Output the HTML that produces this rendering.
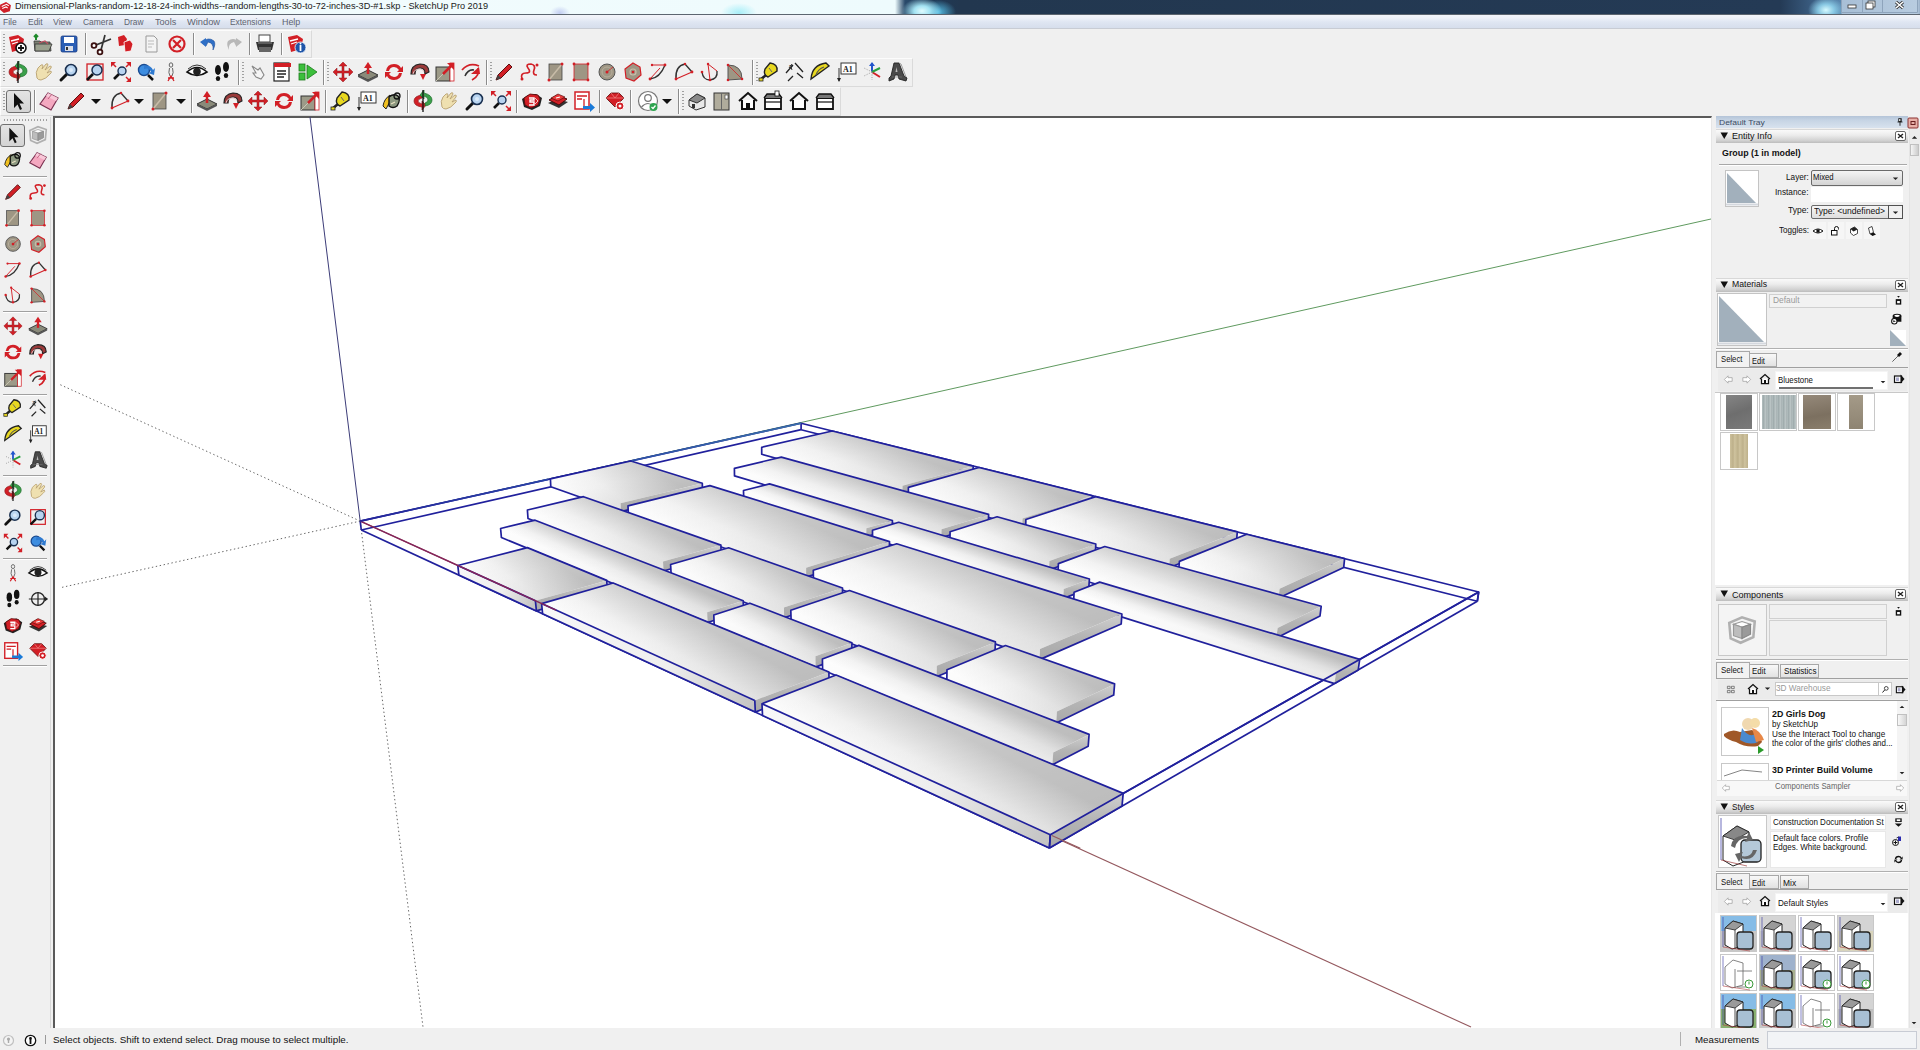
<!DOCTYPE html><html><head><meta charset="utf-8"><style>
*{margin:0;padding:0;box-sizing:border-box}
html,body{width:1920px;height:1050px;overflow:hidden;background:#f0f0f0;font-family:"Liberation Sans", sans-serif}
.a{position:absolute}
#title{left:0;top:0;width:1920px;height:14px;overflow:hidden;background:
radial-gradient(ellipse 10px 7px at 560px 13px,rgba(150,160,230,0.5),rgba(150,160,230,0) 100%),
radial-gradient(ellipse 18px 10px at 739px 13px,rgba(120,230,245,0.6),rgba(120,230,245,0) 100%),
radial-gradient(ellipse 20px 13px at 922px 11px,rgba(225,252,255,1),rgba(170,235,250,0.95) 40%,rgba(60,150,210,0) 100%),
radial-gradient(ellipse 18px 12px at 938px 12px,rgba(90,200,240,0.9),rgba(60,150,210,0) 100%),
radial-gradient(ellipse 18px 13px at 1826px 10px,rgba(215,250,255,1),rgba(150,220,245,0.8) 45%,rgba(60,150,210,0) 100%),
linear-gradient(90deg,#f3fcfd 0px,#eefbfd 895px,#2a4a6a 905px,#1f3a58 930px,#22374f 960px,#243a55 1780px,#3a5c80 1812px,#5a88b0 1841px,#a8bfd6 1842px,#b8cce0 1917px,#9ab0c8 1920px)}
#titleline{left:0;top:14px;width:1920px;height:1px;background:#5d6670}
#menu{left:0;top:15px;width:1920px;height:14px;background:linear-gradient(180deg,#f3f5fa 0,#eef1f8 3px,#dfe6f2 7px,#d6deec 13px);border-bottom:1px solid #c8ccd4}
#menu span{position:absolute;top:1px;font-size:10.5px;line-height:12px;color:#6a7a90}
#tb{left:0;top:29px;width:1920px;height:88px;background:#f0f0f0}
#vp{left:53px;top:116px;width:1659px;height:913px;background:#fff;border-top:2px solid #5a5a5a;border-left:2px solid #5a5a5a;border-bottom:1px solid #cfcfcf;border-right:1px solid #e6e6e6}
#lt{left:0;top:117px;width:51px;height:911px;background:#f0f0f0;border-right:1px solid #d8d8d8}
#status{left:0;top:1028px;width:1920px;height:22px;background:#f0f0f0}
#status .t{position:absolute;top:5px;font-size:10.5px;line-height:12px;color:#111;white-space:nowrap}
</style></head><body>
<div class="a" id="title"></div>
<div class="a" style="left:14.64px;top:0.63px;font-size:9px;line-height:11.7px;color:#1a1a1a;white-space:nowrap;transform-origin:0 0;transform:scaleX(1.019);">Dimensional-Planks-random-12-18-24-inch-widths--random-lengths-30-to-72-inches-3D-#1.skp - SketchUp Pro 2019</div>
<div class="a" id="titleline"></div>
<svg class="a" style="left:-1.5px;top:0.5px" width="13" height="13" viewBox="0 0 24 24"><use href="#i_logo"/></svg>
<svg class="a" style="left:1841px;top:0px" width="79" height="14"><path d="M21.5 0 V12 M41.5 0 V12" stroke="#8ea4bc" stroke-width="1"/><path d="M0.5 0 V12.5 H76.5 V0" fill="none" stroke="#8ea4bc" stroke-width="1"/><rect x="7" y="5" width="8" height="3" fill="#fff" stroke="#333" stroke-width="0.8"/><rect x="27" y="1" width="7" height="6" fill="#fff" stroke="#333" stroke-width="0.8"/><rect x="25" y="3" width="7" height="6" fill="#fff" stroke="#333" stroke-width="0.8"/><path d="M55 2 L62 8 M62 2 L55 8" stroke="#333" stroke-width="3"/><path d="M55 2 L62 8 M62 2 L55 8" stroke="#fff" stroke-width="1.6"/></svg>
<div class="a" id="menu"></div>
<div class="a" style="left:3.38px;top:16.48px;font-size:9.3px;line-height:12.09px;color:#5f6470;white-space:nowrap;transform-origin:0 0;transform:scaleX(0.918);">File</div>
<div class="a" style="left:27.53px;top:16.48px;font-size:9.3px;line-height:12.09px;color:#5f6470;white-space:nowrap;transform-origin:0 0;transform:scaleX(0.911);">Edit</div>
<div class="a" style="left:52.93px;top:16.48px;font-size:9.3px;line-height:12.09px;color:#5f6470;white-space:nowrap;transform-origin:0 0;transform:scaleX(0.936);">View</div>
<div class="a" style="left:82.53px;top:16.48px;font-size:9.3px;line-height:12.09px;color:#5f6470;white-space:nowrap;transform-origin:0 0;transform:scaleX(0.910);">Camera</div>
<div class="a" style="left:123.83px;top:16.48px;font-size:9.3px;line-height:12.09px;color:#5f6470;white-space:nowrap;transform-origin:0 0;transform:scaleX(0.901);">Draw</div>
<div class="a" style="left:154.63px;top:16.48px;font-size:9.3px;line-height:12.09px;color:#5f6470;white-space:nowrap;transform-origin:0 0;transform:scaleX(0.979);">Tools</div>
<div class="a" style="left:186.63px;top:16.48px;font-size:9.3px;line-height:12.09px;color:#5f6470;white-space:nowrap;transform-origin:0 0;transform:scaleX(0.998);">Window</div>
<div class="a" style="left:230.43px;top:16.48px;font-size:9.3px;line-height:12.09px;color:#5f6470;white-space:nowrap;transform-origin:0 0;transform:scaleX(0.899);">Extensions</div>
<div class="a" style="left:282.13px;top:16.48px;font-size:9.3px;line-height:12.09px;color:#5f6470;white-space:nowrap;transform-origin:0 0;transform:scaleX(0.957);">Help</div>
<div class="a" id="tb"></div>
<div class="a" id="lt"></div>
<div class="a" id="vp"></div>
<svg width="1920" height="1050" style="position:absolute;left:0;top:0">
<defs><clipPath id="vp"><rect x="54" y="117" width="1657" height="910"/></clipPath><linearGradient id="gv" x1="0" y1="0" x2="0.25" y2="1" gradientUnits="objectBoundingBox"><stop offset="0" stop-color="#fcfcfc"/><stop offset="0.3" stop-color="#f4f4f4"/><stop offset="0.75" stop-color="#d4d4d4"/><stop offset="1" stop-color="#c0c0c0"/></linearGradient><linearGradient id="ge" x1="0" y1="0" x2="0" y2="1"><stop offset="0" stop-color="#d0d0d0"/><stop offset="0.5" stop-color="#b4b4b4"/><stop offset="1" stop-color="#a8a8a8"/></linearGradient><linearGradient id="g1" gradientUnits="userSpaceOnUse" x1="0" y1="0" x2="0.3" y2="1" gradientTransform="matrix(140.87 38.47 70.58 -16.33 761.67 447.29)"><stop offset="0" stop-color="#fdfdfd"/><stop offset="0.35" stop-color="#f3f3f3"/><stop offset="0.8" stop-color="#d8d8d8"/><stop offset="1" stop-color="#cccccc"/></linearGradient><linearGradient id="h1" gradientUnits="userSpaceOnUse" x1="0" y1="0" x2="1" y2="0" gradientTransform="matrix(140.87 38.47 70.58 -16.33 761.67 447.29)"><stop offset="0" stop-color="#000" stop-opacity="0"/><stop offset="0.45" stop-color="#000" stop-opacity="0.02"/><stop offset="1" stop-color="#000" stop-opacity="0.08"/></linearGradient><linearGradient id="g2" gradientUnits="userSpaceOnUse" x1="0" y1="0" x2="0.3" y2="1" gradientTransform="matrix(114.17 31.18 70.64 -19.84 908.36 487.35)"><stop offset="0" stop-color="#fdfdfd"/><stop offset="0.35" stop-color="#f3f3f3"/><stop offset="0.8" stop-color="#d8d8d8"/><stop offset="1" stop-color="#cccccc"/></linearGradient><linearGradient id="h2" gradientUnits="userSpaceOnUse" x1="0" y1="0" x2="1" y2="0" gradientTransform="matrix(114.17 31.18 70.64 -19.84 908.36 487.35)"><stop offset="0" stop-color="#000" stop-opacity="0"/><stop offset="0.45" stop-color="#000" stop-opacity="0.02"/><stop offset="1" stop-color="#000" stop-opacity="0.08"/></linearGradient><linearGradient id="g3" gradientUnits="userSpaceOnUse" x1="0" y1="0" x2="0.3" y2="1" gradientTransform="matrix(143.84 39.29 69.75 -22.88 1025.90 519.46)"><stop offset="0" stop-color="#fdfdfd"/><stop offset="0.35" stop-color="#f3f3f3"/><stop offset="0.8" stop-color="#d8d8d8"/><stop offset="1" stop-color="#cccccc"/></linearGradient><linearGradient id="h3" gradientUnits="userSpaceOnUse" x1="0" y1="0" x2="1" y2="0" gradientTransform="matrix(143.84 39.29 69.75 -22.88 1025.90 519.46)"><stop offset="0" stop-color="#000" stop-opacity="0"/><stop offset="0.45" stop-color="#000" stop-opacity="0.02"/><stop offset="1" stop-color="#000" stop-opacity="0.08"/></linearGradient><linearGradient id="g4" gradientUnits="userSpaceOnUse" x1="0" y1="0" x2="0.3" y2="1" gradientTransform="matrix(100.22 27.37 67.35 -27.16 1179.36 561.37)"><stop offset="0" stop-color="#fdfdfd"/><stop offset="0.35" stop-color="#f3f3f3"/><stop offset="0.8" stop-color="#d8d8d8"/><stop offset="1" stop-color="#cccccc"/></linearGradient><linearGradient id="h4" gradientUnits="userSpaceOnUse" x1="0" y1="0" x2="1" y2="0" gradientTransform="matrix(100.22 27.37 67.35 -27.16 1179.36 561.37)"><stop offset="0" stop-color="#000" stop-opacity="0"/><stop offset="0.45" stop-color="#000" stop-opacity="0.02"/><stop offset="1" stop-color="#000" stop-opacity="0.08"/></linearGradient><linearGradient id="g5" gradientUnits="userSpaceOnUse" x1="0" y1="0" x2="0.3" y2="1" gradientTransform="matrix(207.17 60.85 46.92 -11.27 734.36 468.42)"><stop offset="0" stop-color="#fdfdfd"/><stop offset="0.35" stop-color="#f3f3f3"/><stop offset="0.8" stop-color="#d8d8d8"/><stop offset="1" stop-color="#cccccc"/></linearGradient><linearGradient id="h5" gradientUnits="userSpaceOnUse" x1="0" y1="0" x2="1" y2="0" gradientTransform="matrix(207.17 60.85 46.92 -11.27 734.36 468.42)"><stop offset="0" stop-color="#000" stop-opacity="0"/><stop offset="0.45" stop-color="#000" stop-opacity="0.02"/><stop offset="1" stop-color="#000" stop-opacity="0.08"/></linearGradient><linearGradient id="g6" gradientUnits="userSpaceOnUse" x1="0" y1="0" x2="0.3" y2="1" gradientTransform="matrix(99.29 29.17 47.02 -15.02 950.10 531.79)"><stop offset="0" stop-color="#fdfdfd"/><stop offset="0.35" stop-color="#f3f3f3"/><stop offset="0.8" stop-color="#d8d8d8"/><stop offset="1" stop-color="#cccccc"/></linearGradient><linearGradient id="h6" gradientUnits="userSpaceOnUse" x1="0" y1="0" x2="1" y2="0" gradientTransform="matrix(99.29 29.17 47.02 -15.02 950.10 531.79)"><stop offset="0" stop-color="#000" stop-opacity="0"/><stop offset="0.45" stop-color="#000" stop-opacity="0.02"/><stop offset="1" stop-color="#000" stop-opacity="0.08"/></linearGradient><linearGradient id="g7" gradientUnits="userSpaceOnUse" x1="0" y1="0" x2="0.3" y2="1" gradientTransform="matrix(219.14 64.37 46.36 -17.09 1058.42 563.61)"><stop offset="0" stop-color="#fdfdfd"/><stop offset="0.35" stop-color="#f3f3f3"/><stop offset="0.8" stop-color="#d8d8d8"/><stop offset="1" stop-color="#cccccc"/></linearGradient><linearGradient id="h7" gradientUnits="userSpaceOnUse" x1="0" y1="0" x2="1" y2="0" gradientTransform="matrix(219.14 64.37 46.36 -17.09 1058.42 563.61)"><stop offset="0" stop-color="#000" stop-opacity="0"/><stop offset="0.45" stop-color="#000" stop-opacity="0.02"/><stop offset="1" stop-color="#000" stop-opacity="0.08"/></linearGradient><linearGradient id="g8" gradientUnits="userSpaceOnUse" x1="0" y1="0" x2="0.3" y2="1" gradientTransform="matrix(122.72 37.76 25.97 -6.62 743.55 490.54)"><stop offset="0" stop-color="#fdfdfd"/><stop offset="0.35" stop-color="#f3f3f3"/><stop offset="0.8" stop-color="#d8d8d8"/><stop offset="1" stop-color="#cccccc"/></linearGradient><linearGradient id="h8" gradientUnits="userSpaceOnUse" x1="0" y1="0" x2="1" y2="0" gradientTransform="matrix(122.72 37.76 25.97 -6.62 743.55 490.54)"><stop offset="0" stop-color="#000" stop-opacity="0"/><stop offset="0.45" stop-color="#000" stop-opacity="0.02"/><stop offset="1" stop-color="#000" stop-opacity="0.08"/></linearGradient><linearGradient id="g9" gradientUnits="userSpaceOnUse" x1="0" y1="0" x2="0.3" y2="1" gradientTransform="matrix(191.15 58.81 26.13 -7.90 872.53 530.22)"><stop offset="0" stop-color="#fdfdfd"/><stop offset="0.35" stop-color="#f3f3f3"/><stop offset="0.8" stop-color="#d8d8d8"/><stop offset="1" stop-color="#cccccc"/></linearGradient><linearGradient id="h9" gradientUnits="userSpaceOnUse" x1="0" y1="0" x2="1" y2="0" gradientTransform="matrix(191.15 58.81 26.13 -7.90 872.53 530.22)"><stop offset="0" stop-color="#000" stop-opacity="0"/><stop offset="0.45" stop-color="#000" stop-opacity="0.02"/><stop offset="1" stop-color="#000" stop-opacity="0.08"/></linearGradient><linearGradient id="g10" gradientUnits="userSpaceOnUse" x1="0" y1="0" x2="0.3" y2="1" gradientTransform="matrix(261.94 80.59 25.64 -10.12 1074.10 592.24)"><stop offset="0" stop-color="#fdfdfd"/><stop offset="0.35" stop-color="#f3f3f3"/><stop offset="0.8" stop-color="#d8d8d8"/><stop offset="1" stop-color="#cccccc"/></linearGradient><linearGradient id="h10" gradientUnits="userSpaceOnUse" x1="0" y1="0" x2="1" y2="0" gradientTransform="matrix(261.94 80.59 25.64 -10.12 1074.10 592.24)"><stop offset="0" stop-color="#000" stop-opacity="0"/><stop offset="0.45" stop-color="#000" stop-opacity="0.02"/><stop offset="1" stop-color="#000" stop-opacity="0.08"/></linearGradient><linearGradient id="g11" gradientUnits="userSpaceOnUse" x1="0" y1="0" x2="0.3" y2="1" gradientTransform="matrix(70.18 24.38 80.51 -17.88 550.36 478.88)"><stop offset="0" stop-color="#fdfdfd"/><stop offset="0.35" stop-color="#f3f3f3"/><stop offset="0.8" stop-color="#d8d8d8"/><stop offset="1" stop-color="#cccccc"/></linearGradient><linearGradient id="h11" gradientUnits="userSpaceOnUse" x1="0" y1="0" x2="1" y2="0" gradientTransform="matrix(70.18 24.38 80.51 -17.88 550.36 478.88)"><stop offset="0" stop-color="#000" stop-opacity="0"/><stop offset="0.45" stop-color="#000" stop-opacity="0.02"/><stop offset="1" stop-color="#000" stop-opacity="0.08"/></linearGradient><linearGradient id="g12" gradientUnits="userSpaceOnUse" x1="0" y1="0" x2="0.3" y2="1" gradientTransform="matrix(178.08 61.86 81.89 -20.22 628.01 505.85)"><stop offset="0" stop-color="#fdfdfd"/><stop offset="0.35" stop-color="#f3f3f3"/><stop offset="0.8" stop-color="#d8d8d8"/><stop offset="1" stop-color="#cccccc"/></linearGradient><linearGradient id="h12" gradientUnits="userSpaceOnUse" x1="0" y1="0" x2="1" y2="0" gradientTransform="matrix(178.08 61.86 81.89 -20.22 628.01 505.85)"><stop offset="0" stop-color="#000" stop-opacity="0"/><stop offset="0.45" stop-color="#000" stop-opacity="0.02"/><stop offset="1" stop-color="#000" stop-opacity="0.08"/></linearGradient><linearGradient id="g13" gradientUnits="userSpaceOnUse" x1="0" y1="0" x2="0.3" y2="1" gradientTransform="matrix(226.71 78.76 83.42 -26.37 813.27 570.21)"><stop offset="0" stop-color="#fdfdfd"/><stop offset="0.35" stop-color="#f3f3f3"/><stop offset="0.8" stop-color="#d8d8d8"/><stop offset="1" stop-color="#cccccc"/></linearGradient><linearGradient id="h13" gradientUnits="userSpaceOnUse" x1="0" y1="0" x2="1" y2="0" gradientTransform="matrix(226.71 78.76 83.42 -26.37 813.27 570.21)"><stop offset="0" stop-color="#000" stop-opacity="0"/><stop offset="0.45" stop-color="#000" stop-opacity="0.02"/><stop offset="1" stop-color="#000" stop-opacity="0.08"/></linearGradient><linearGradient id="g14" gradientUnits="userSpaceOnUse" x1="0" y1="0" x2="0.3" y2="1" gradientTransform="matrix(135.65 51.62 56.14 -13.24 527.38 509.96)"><stop offset="0" stop-color="#fdfdfd"/><stop offset="0.35" stop-color="#f3f3f3"/><stop offset="0.8" stop-color="#d8d8d8"/><stop offset="1" stop-color="#cccccc"/></linearGradient><linearGradient id="h14" gradientUnits="userSpaceOnUse" x1="0" y1="0" x2="1" y2="0" gradientTransform="matrix(135.65 51.62 56.14 -13.24 527.38 509.96)"><stop offset="0" stop-color="#000" stop-opacity="0"/><stop offset="0.45" stop-color="#000" stop-opacity="0.02"/><stop offset="1" stop-color="#000" stop-opacity="0.08"/></linearGradient><linearGradient id="g15" gradientUnits="userSpaceOnUse" x1="0" y1="0" x2="0.3" y2="1" gradientTransform="matrix(113.29 43.11 57.95 -16.62 670.61 564.46)"><stop offset="0" stop-color="#fdfdfd"/><stop offset="0.35" stop-color="#f3f3f3"/><stop offset="0.8" stop-color="#d8d8d8"/><stop offset="1" stop-color="#cccccc"/></linearGradient><linearGradient id="h15" gradientUnits="userSpaceOnUse" x1="0" y1="0" x2="1" y2="0" gradientTransform="matrix(113.29 43.11 57.95 -16.62 670.61 564.46)"><stop offset="0" stop-color="#000" stop-opacity="0"/><stop offset="0.45" stop-color="#000" stop-opacity="0.02"/><stop offset="1" stop-color="#000" stop-opacity="0.08"/></linearGradient><linearGradient id="g16" gradientUnits="userSpaceOnUse" x1="0" y1="0" x2="0.3" y2="1" gradientTransform="matrix(145.98 55.55 58.66 -19.74 790.84 610.21)"><stop offset="0" stop-color="#fdfdfd"/><stop offset="0.35" stop-color="#f3f3f3"/><stop offset="0.8" stop-color="#d8d8d8"/><stop offset="1" stop-color="#cccccc"/></linearGradient><linearGradient id="h16" gradientUnits="userSpaceOnUse" x1="0" y1="0" x2="1" y2="0" gradientTransform="matrix(145.98 55.55 58.66 -19.74 790.84 610.21)"><stop offset="0" stop-color="#000" stop-opacity="0"/><stop offset="0.45" stop-color="#000" stop-opacity="0.02"/><stop offset="1" stop-color="#000" stop-opacity="0.08"/></linearGradient><linearGradient id="g17" gradientUnits="userSpaceOnUse" x1="0" y1="0" x2="0.3" y2="1" gradientTransform="matrix(109.91 41.82 58.49 -24.17 947.04 669.65)"><stop offset="0" stop-color="#fdfdfd"/><stop offset="0.35" stop-color="#f3f3f3"/><stop offset="0.8" stop-color="#d8d8d8"/><stop offset="1" stop-color="#cccccc"/></linearGradient><linearGradient id="h17" gradientUnits="userSpaceOnUse" x1="0" y1="0" x2="1" y2="0" gradientTransform="matrix(109.91 41.82 58.49 -24.17 947.04 669.65)"><stop offset="0" stop-color="#000" stop-opacity="0"/><stop offset="0.45" stop-color="#000" stop-opacity="0.02"/><stop offset="1" stop-color="#000" stop-opacity="0.08"/></linearGradient><linearGradient id="g18" gradientUnits="userSpaceOnUse" x1="0" y1="0" x2="0.3" y2="1" gradientTransform="matrix(206.48 83.73 34.46 -8.35 500.64 528.54)"><stop offset="0" stop-color="#fdfdfd"/><stop offset="0.35" stop-color="#f3f3f3"/><stop offset="0.8" stop-color="#d8d8d8"/><stop offset="1" stop-color="#cccccc"/></linearGradient><linearGradient id="h18" gradientUnits="userSpaceOnUse" x1="0" y1="0" x2="1" y2="0" gradientTransform="matrix(206.48 83.73 34.46 -8.35 500.64 528.54)"><stop offset="0" stop-color="#000" stop-opacity="0"/><stop offset="0.45" stop-color="#000" stop-opacity="0.02"/><stop offset="1" stop-color="#000" stop-opacity="0.08"/></linearGradient><linearGradient id="g19" gradientUnits="userSpaceOnUse" x1="0" y1="0" x2="0.3" y2="1" gradientTransform="matrix(101.66 41.22 36.14 -11.71 713.75 614.95)"><stop offset="0" stop-color="#fdfdfd"/><stop offset="0.35" stop-color="#f3f3f3"/><stop offset="0.8" stop-color="#d8d8d8"/><stop offset="1" stop-color="#cccccc"/></linearGradient><linearGradient id="h19" gradientUnits="userSpaceOnUse" x1="0" y1="0" x2="1" y2="0" gradientTransform="matrix(101.66 41.22 36.14 -11.71 713.75 614.95)"><stop offset="0" stop-color="#000" stop-opacity="0"/><stop offset="0.45" stop-color="#000" stop-opacity="0.02"/><stop offset="1" stop-color="#000" stop-opacity="0.08"/></linearGradient><linearGradient id="g20" gradientUnits="userSpaceOnUse" x1="0" y1="0" x2="0.3" y2="1" gradientTransform="matrix(230.83 93.60 36.45 -13.63 822.37 659.00)"><stop offset="0" stop-color="#fdfdfd"/><stop offset="0.35" stop-color="#f3f3f3"/><stop offset="0.8" stop-color="#d8d8d8"/><stop offset="1" stop-color="#cccccc"/></linearGradient><linearGradient id="h20" gradientUnits="userSpaceOnUse" x1="0" y1="0" x2="1" y2="0" gradientTransform="matrix(230.83 93.60 36.45 -13.63 822.37 659.00)"><stop offset="0" stop-color="#000" stop-opacity="0"/><stop offset="0.45" stop-color="#000" stop-opacity="0.02"/><stop offset="1" stop-color="#000" stop-opacity="0.08"/></linearGradient><linearGradient id="g21" gradientUnits="userSpaceOnUse" x1="0" y1="0" x2="0.3" y2="1" gradientTransform="matrix(77.58 35.25 69.61 -17.82 457.82 565.46)"><stop offset="0" stop-color="#fdfdfd"/><stop offset="0.35" stop-color="#f3f3f3"/><stop offset="0.8" stop-color="#d8d8d8"/><stop offset="1" stop-color="#cccccc"/></linearGradient><linearGradient id="h21" gradientUnits="userSpaceOnUse" x1="0" y1="0" x2="1" y2="0" gradientTransform="matrix(77.58 35.25 69.61 -17.82 457.82 565.46)"><stop offset="0" stop-color="#000" stop-opacity="0"/><stop offset="0.45" stop-color="#000" stop-opacity="0.02"/><stop offset="1" stop-color="#000" stop-opacity="0.08"/></linearGradient><linearGradient id="f21" gradientUnits="userSpaceOnUse" x1="457.8" y1="565.5" x2="535.4" y2="600.7"><stop offset="0" stop-color="#f8f8f8"/><stop offset="0.6" stop-color="#eeeeee"/><stop offset="1" stop-color="#c4c4c4"/></linearGradient><linearGradient id="g22" gradientUnits="userSpaceOnUse" x1="0" y1="0" x2="0.3" y2="1" gradientTransform="matrix(213.20 96.89 71.45 -20.57 541.64 603.55)"><stop offset="0" stop-color="#fdfdfd"/><stop offset="0.35" stop-color="#f3f3f3"/><stop offset="0.8" stop-color="#d8d8d8"/><stop offset="1" stop-color="#cccccc"/></linearGradient><linearGradient id="h22" gradientUnits="userSpaceOnUse" x1="0" y1="0" x2="1" y2="0" gradientTransform="matrix(213.20 96.89 71.45 -20.57 541.64 603.55)"><stop offset="0" stop-color="#000" stop-opacity="0"/><stop offset="0.45" stop-color="#000" stop-opacity="0.02"/><stop offset="1" stop-color="#000" stop-opacity="0.08"/></linearGradient><linearGradient id="f22" gradientUnits="userSpaceOnUse" x1="541.6" y1="603.6" x2="754.8" y2="700.4"><stop offset="0" stop-color="#f8f8f8"/><stop offset="0.6" stop-color="#eeeeee"/><stop offset="1" stop-color="#c4c4c4"/></linearGradient><linearGradient id="g23" gradientUnits="userSpaceOnUse" x1="0" y1="0" x2="0.3" y2="1" gradientTransform="matrix(288.28 131.00 74.11 -28.71 762.02 703.70)"><stop offset="0" stop-color="#fdfdfd"/><stop offset="0.35" stop-color="#f3f3f3"/><stop offset="0.8" stop-color="#d8d8d8"/><stop offset="1" stop-color="#cccccc"/></linearGradient><linearGradient id="h23" gradientUnits="userSpaceOnUse" x1="0" y1="0" x2="1" y2="0" gradientTransform="matrix(288.28 131.00 74.11 -28.71 762.02 703.70)"><stop offset="0" stop-color="#000" stop-opacity="0"/><stop offset="0.45" stop-color="#000" stop-opacity="0.02"/><stop offset="1" stop-color="#000" stop-opacity="0.08"/></linearGradient><linearGradient id="f23" gradientUnits="userSpaceOnUse" x1="762.0" y1="703.7" x2="1050.3" y2="834.7"><stop offset="0" stop-color="#f8f8f8"/><stop offset="0.6" stop-color="#eeeeee"/><stop offset="1" stop-color="#c4c4c4"/></linearGradient><linearGradient id="gob" gradientUnits="userSpaceOnUse" x1="360.2" y1="521.1" x2="801.1" y2="423.2"><stop offset="0" stop-color="#24249c"/><stop offset="0.5" stop-color="#2a4aa8"/><stop offset="1" stop-color="#3a70a8"/></linearGradient></defs>
<g clip-path="url(#vp)">
<line x1="360.2" y1="521.1" x2="310" y2="117" stroke="#3c3c78" stroke-width="1"/>
<line x1="360.2" y1="521.1" x2="423" y2="1027" stroke="#666" stroke-width="1" stroke-dasharray="1.4,2.6"/>
<line x1="360.2" y1="521.1" x2="60" y2="384.6" stroke="#666" stroke-width="1" stroke-dasharray="1.4,2.6"/>
<line x1="360.2" y1="521.1" x2="60" y2="587.8" stroke="#666" stroke-width="1" stroke-dasharray="1.4,2.6"/>
<line x1="360.2" y1="521.1" x2="1711" y2="219" stroke="#5f9a5f" stroke-width="1"/>
<line x1="360.2" y1="521.1" x2="1471" y2="1027" stroke="#94585e" stroke-width="1.1"/>
<line x1="361.3" y1="530.0" x2="1049.4" y2="848.0" stroke="#20209c" stroke-width="1.7"/>
<line x1="360.2" y1="521.1" x2="361.3" y2="530.0" stroke="#20209c" stroke-width="1.7"/>
<line x1="1050.3" y1="834.7" x2="1478.7" y2="592.0" stroke="#20209c" stroke-width="1.7"/>
<line x1="1049.4" y1="848.0" x2="1477.3" y2="601.3" stroke="#20209c" stroke-width="1.7"/>
<line x1="1050.3" y1="834.7" x2="1049.4" y2="848.0" stroke="#20209c" stroke-width="1.7"/>
<line x1="1478.7" y1="592.0" x2="801.1" y2="423.2" stroke="#20209c" stroke-width="1.7"/>
<line x1="1477.3" y1="601.3" x2="801.1" y2="429.7" stroke="#20209c" stroke-width="1.7"/>
<line x1="1478.7" y1="592.0" x2="1477.3" y2="601.3" stroke="#20209c" stroke-width="1.7"/>
<line x1="801.1" y1="423.2" x2="360.2" y2="521.1" stroke="#20209c" stroke-width="1.7"/>
<line x1="801.1" y1="429.7" x2="361.3" y2="530.0" stroke="#20209c" stroke-width="1.7"/>
<line x1="801.1" y1="423.2" x2="801.1" y2="429.7" stroke="#20209c" stroke-width="1.7"/>
<polygon points="832.3,431.0 761.7,447.3 761.7,454.3 902.5,493.5 902.5,485.8 973.2,466.1" fill="url(#g1)"/>
<polygon points="832.3,431.0 761.7,447.3 761.7,454.3 902.5,493.5 902.5,485.8 973.2,466.1" fill="url(#h1)"/>
<polygon points="902.5,485.8 973.2,466.1 973.0,473.3 902.5,493.5" fill="url(#ge)"/>
<polyline points="902.5,493.5 761.7,454.3 761.7,447.3 832.3,431.0 973.2,466.1 973.0,473.3 902.5,493.5" fill="none" stroke="#20209c" stroke-width="1.7" stroke-linejoin="round"/>
<polygon points="979.0,467.5 908.4,487.4 908.3,495.1 1022.2,526.8 1022.5,518.5 1092.3,495.7" fill="url(#g2)"/>
<polygon points="979.0,467.5 908.4,487.4 908.3,495.1 1022.2,526.8 1022.5,518.5 1092.3,495.7" fill="url(#h2)"/>
<polygon points="1022.5,518.5 1092.3,495.7 1092.0,503.5 1022.2,526.8" fill="url(#ge)"/>
<polyline points="1022.2,526.8 908.3,495.1 908.4,487.4 979.0,467.5 1092.3,495.7 1092.0,503.5 1022.2,526.8" fill="none" stroke="#20209c" stroke-width="1.7" stroke-linejoin="round"/>
<polygon points="1095.7,496.6 1025.9,519.5 1025.6,527.8 1169.1,567.7 1169.7,558.7 1237.3,531.9" fill="url(#g3)"/>
<polygon points="1095.7,496.6 1025.9,519.5 1025.6,527.8 1169.1,567.7 1169.7,558.7 1237.3,531.9" fill="url(#h3)"/>
<polygon points="1169.7,558.7 1237.3,531.9 1236.6,540.2 1169.1,567.7" fill="url(#ge)"/>
<polyline points="1169.1,567.7 1025.6,527.8 1025.9,519.5 1095.7,496.6 1237.3,531.9 1236.6,540.2 1169.1,567.7" fill="none" stroke="#20209c" stroke-width="1.7" stroke-linejoin="round"/>
<polygon points="1246.7,534.2 1179.4,561.4 1178.7,570.3 1278.6,598.1 1279.6,588.7 1344.6,558.6" fill="url(#g4)"/>
<polygon points="1246.7,534.2 1179.4,561.4 1178.7,570.3 1278.6,598.1 1279.6,588.7 1344.6,558.6" fill="url(#h4)"/>
<polygon points="1279.6,588.7 1344.6,558.6 1343.7,567.4 1278.6,598.1" fill="url(#ge)"/>
<polyline points="1278.6,598.1 1178.7,570.3 1179.4,561.4 1246.7,534.2 1344.6,558.6 1343.7,567.4 1278.6,598.1" fill="none" stroke="#20209c" stroke-width="1.7" stroke-linejoin="round"/>
<polygon points="781.3,457.1 734.4,468.4 734.5,475.9 941.4,537.8 941.5,529.3 988.6,514.4" fill="url(#g5)"/>
<polygon points="781.3,457.1 734.4,468.4 734.5,475.9 941.4,537.8 941.5,529.3 988.6,514.4" fill="url(#h5)"/>
<polygon points="941.5,529.3 988.6,514.4 988.4,522.6 941.4,537.8" fill="url(#ge)"/>
<polyline points="941.4,537.8 734.5,475.9 734.4,468.4 781.3,457.1 988.6,514.4 988.4,522.6 941.4,537.8" fill="none" stroke="#20209c" stroke-width="1.7" stroke-linejoin="round"/>
<polygon points="997.1,516.8 950.1,531.8 949.9,540.4 1049.0,570.0 1049.4,561.0 1095.8,544.0" fill="url(#g6)"/>
<polygon points="997.1,516.8 950.1,531.8 949.9,540.4 1049.0,570.0 1049.4,561.0 1095.8,544.0" fill="url(#h6)"/>
<polygon points="1049.4,561.0 1095.8,544.0 1095.4,552.8 1049.0,570.0" fill="url(#ge)"/>
<polyline points="1049.0,570.0 949.9,540.4 950.1,531.8 997.1,516.8 1095.8,544.0 1095.4,552.8 1049.0,570.0" fill="none" stroke="#20209c" stroke-width="1.7" stroke-linejoin="round"/>
<polygon points="1104.8,546.5 1058.4,563.6 1058.0,572.7 1276.4,638.1 1277.6,628.0 1321.2,606.3" fill="url(#g7)"/>
<polygon points="1104.8,546.5 1058.4,563.6 1058.0,572.7 1276.4,638.1 1277.6,628.0 1321.2,606.3" fill="url(#h7)"/>
<polygon points="1277.6,628.0 1321.2,606.3 1320.0,616.0 1276.4,638.1" fill="url(#ge)"/>
<polyline points="1276.4,638.1 1058.0,572.7 1058.4,563.6 1104.8,546.5 1321.2,606.3 1320.0,616.0 1276.4,638.1" fill="none" stroke="#20209c" stroke-width="1.7" stroke-linejoin="round"/>
<polygon points="769.5,483.9 743.5,490.5 743.7,498.5 866.3,536.9 866.3,528.3 892.4,520.5" fill="url(#g8)"/>
<polygon points="769.5,483.9 743.5,490.5 743.7,498.5 866.3,536.9 866.3,528.3 892.4,520.5" fill="url(#h8)"/>
<polygon points="866.3,528.3 892.4,520.5 892.3,528.9 866.3,536.9" fill="url(#ge)"/>
<polyline points="866.3,536.9 743.7,498.5 743.5,490.5 769.5,483.9 892.4,520.5 892.3,528.9 866.3,536.9" fill="none" stroke="#20209c" stroke-width="1.7" stroke-linejoin="round"/>
<polygon points="898.7,522.3 872.5,530.2 872.5,538.9 1063.2,598.6 1063.7,589.0 1089.4,579.0" fill="url(#g9)"/>
<polygon points="898.7,522.3 872.5,530.2 872.5,538.9 1063.2,598.6 1063.7,589.0 1089.4,579.0" fill="url(#h9)"/>
<polygon points="1063.7,589.0 1089.4,579.0 1088.8,588.4 1063.2,598.6" fill="url(#ge)"/>
<polyline points="1063.2,598.6 872.5,538.9 872.5,530.2 898.7,522.3 1089.4,579.0 1088.8,588.4 1063.2,598.6" fill="none" stroke="#20209c" stroke-width="1.7" stroke-linejoin="round"/>
<polygon points="1099.7,582.1 1074.1,592.2 1073.6,601.9 1334.5,683.6 1336.0,672.8 1359.7,659.4" fill="url(#g10)"/>
<polygon points="1099.7,582.1 1074.1,592.2 1073.6,601.9 1334.5,683.6 1336.0,672.8 1359.7,659.4" fill="url(#h10)"/>
<polygon points="1336.0,672.8 1359.7,659.4 1358.2,670.0 1334.5,683.6" fill="url(#ge)"/>
<polyline points="1334.5,683.6 1073.6,601.9 1074.1,592.2 1099.7,582.1 1359.7,659.4 1358.2,670.0 1334.5,683.6" fill="none" stroke="#20209c" stroke-width="1.7" stroke-linejoin="round"/>
<polygon points="630.9,461.0 550.4,478.9 550.8,486.8 621.0,511.6 620.5,503.3 702.3,483.3" fill="url(#g11)"/>
<polygon points="630.9,461.0 550.4,478.9 550.8,486.8 621.0,511.6 620.5,503.3 702.3,483.3" fill="url(#h11)"/>
<polygon points="620.5,503.3 702.3,483.3 702.5,491.1 621.0,511.6" fill="url(#ge)"/>
<polyline points="621.0,511.6 550.8,486.8 550.4,478.9 630.9,461.0 702.3,483.3 702.5,491.1 621.0,511.6" fill="none" stroke="#20209c" stroke-width="1.7" stroke-linejoin="round"/>
<polygon points="709.9,485.6 628.0,505.9 628.4,514.2 806.2,577.1 806.1,567.7 889.5,541.6" fill="url(#g12)"/>
<polygon points="709.9,485.6 628.0,505.9 628.4,514.2 806.2,577.1 806.1,567.7 889.5,541.6" fill="url(#h12)"/>
<polygon points="806.1,567.7 889.5,541.6 889.4,550.4 806.2,577.1" fill="url(#ge)"/>
<polyline points="806.2,577.1 628.4,514.2 628.0,505.9 709.9,485.6 889.5,541.6 889.4,550.4 806.2,577.1" fill="none" stroke="#20209c" stroke-width="1.7" stroke-linejoin="round"/>
<polygon points="896.7,543.8 813.3,570.2 813.4,579.7 1039.5,659.6 1040.0,649.0 1121.9,614.0" fill="url(#g13)"/>
<polygon points="896.7,543.8 813.3,570.2 813.4,579.7 1039.5,659.6 1040.0,649.0 1121.9,614.0" fill="url(#h13)"/>
<polygon points="1040.0,649.0 1121.9,614.0 1121.2,624.0 1039.5,659.6" fill="url(#ge)"/>
<polyline points="1039.5,659.6 813.4,579.7 813.3,570.2 896.7,543.8 1121.9,614.0 1121.2,624.0 1039.5,659.6" fill="none" stroke="#20209c" stroke-width="1.7" stroke-linejoin="round"/>
<polygon points="583.5,496.7 527.4,510.0 528.0,518.5 663.5,571.0 663.0,561.6 720.9,545.1" fill="url(#g14)"/>
<polygon points="583.5,496.7 527.4,510.0 528.0,518.5 663.5,571.0 663.0,561.6 720.9,545.1" fill="url(#h14)"/>
<polygon points="663.0,561.6 720.9,545.1 721.2,554.2 663.5,571.0" fill="url(#ge)"/>
<polyline points="663.5,571.0 528.0,518.5 527.4,510.0 583.5,496.7 720.9,545.1 721.2,554.2 663.5,571.0" fill="none" stroke="#20209c" stroke-width="1.7" stroke-linejoin="round"/>
<polygon points="728.6,547.8 670.6,564.5 671.1,573.9 784.2,617.7 783.9,607.6 842.5,588.0" fill="url(#g15)"/>
<polygon points="728.6,547.8 670.6,564.5 671.1,573.9 784.2,617.7 783.9,607.6 842.5,588.0" fill="url(#h15)"/>
<polygon points="783.9,607.6 842.5,588.0 842.6,597.8 784.2,617.7" fill="url(#ge)"/>
<polyline points="784.2,617.7 671.1,573.9 670.6,564.5 728.6,547.8 842.5,588.0 842.6,597.8 784.2,617.7" fill="none" stroke="#20209c" stroke-width="1.7" stroke-linejoin="round"/>
<polygon points="849.5,590.5 790.8,610.2 791.1,620.4 936.6,676.8 936.8,665.8 995.4,641.9" fill="url(#g16)"/>
<polygon points="849.5,590.5 790.8,610.2 791.1,620.4 936.6,676.8 936.8,665.8 995.4,641.9" fill="url(#h16)"/>
<polygon points="936.8,665.8 995.4,641.9 995.0,652.4 936.6,676.8" fill="url(#ge)"/>
<polyline points="936.6,676.8 791.1,620.4 790.8,610.2 849.5,590.5 995.4,641.9 995.0,652.4 936.6,676.8" fill="none" stroke="#20209c" stroke-width="1.7" stroke-linejoin="round"/>
<polygon points="1005.5,645.5 947.0,669.7 946.8,680.7 1056.2,723.1 1056.9,711.5 1114.6,683.9" fill="url(#g17)"/>
<polygon points="1005.5,645.5 947.0,669.7 946.8,680.7 1056.2,723.1 1056.9,711.5 1114.6,683.9" fill="url(#h17)"/>
<polygon points="1056.9,711.5 1114.6,683.9 1113.7,695.1 1056.2,723.1" fill="url(#ge)"/>
<polyline points="1056.2,723.1 946.8,680.7 947.0,669.7 1005.5,645.5 1114.6,683.9 1113.7,695.1 1056.2,723.1" fill="none" stroke="#20209c" stroke-width="1.7" stroke-linejoin="round"/>
<polygon points="535.1,520.2 500.6,528.5 501.4,537.5 707.6,622.5 707.1,612.3 743.2,600.7" fill="url(#g18)"/>
<polygon points="535.1,520.2 500.6,528.5 501.4,537.5 707.6,622.5 707.1,612.3 743.2,600.7" fill="url(#h18)"/>
<polygon points="707.1,612.3 743.2,600.7 743.6,610.7 707.6,622.5" fill="url(#ge)"/>
<polyline points="707.6,622.5 501.4,537.5 500.6,528.5 535.1,520.2 743.2,600.7 743.6,610.7 707.6,622.5" fill="none" stroke="#20209c" stroke-width="1.7" stroke-linejoin="round"/>
<polygon points="749.9,603.2 713.8,615.0 714.2,625.3 815.6,667.1 815.4,656.2 851.9,642.7" fill="url(#g19)"/>
<polygon points="749.9,603.2 713.8,615.0 714.2,625.3 815.6,667.1 815.4,656.2 851.9,642.7" fill="url(#h19)"/>
<polygon points="815.4,656.2 851.9,642.7 851.9,653.4 815.6,667.1" fill="url(#ge)"/>
<polyline points="815.6,667.1 714.2,625.3 713.8,615.0 749.9,603.2 851.9,642.7 851.9,653.4 815.6,667.1" fill="none" stroke="#20209c" stroke-width="1.7" stroke-linejoin="round"/>
<polygon points="858.8,645.4 822.4,659.0 822.6,670.0 1052.4,764.8 1053.2,752.6 1089.1,734.4" fill="url(#g20)"/>
<polygon points="858.8,645.4 822.4,659.0 822.6,670.0 1052.4,764.8 1053.2,752.6 1089.1,734.4" fill="url(#h20)"/>
<polygon points="1053.2,752.6 1089.1,734.4 1088.2,746.3 1052.4,764.8" fill="url(#ge)"/>
<polyline points="1052.4,764.8 822.6,670.0 822.4,659.0 858.8,645.4 1089.1,734.4 1088.2,746.3 1052.4,764.8" fill="none" stroke="#20209c" stroke-width="1.7" stroke-linejoin="round"/>
<polygon points="527.4,547.6 457.8,565.5 458.9,575.1 536.4,610.9 535.4,600.7 606.7,580.4" fill="url(#g21)"/>
<polygon points="527.4,547.6 457.8,565.5 458.9,575.1 536.4,610.9 535.4,600.7 606.7,580.4" fill="url(#h21)"/>
<polygon points="457.8,565.5 535.4,600.7 536.4,610.9 458.9,575.1" fill="url(#f21)"/>
<polygon points="535.4,600.7 606.7,580.4 607.4,590.2 536.4,610.9" fill="url(#ge)"/>
<polyline points="535.4,600.7 536.4,610.9 458.9,575.1 457.8,565.5 527.4,547.6 606.7,580.4 607.4,590.2 536.4,610.9" fill="none" stroke="#20209c" stroke-width="1.7" stroke-linejoin="round"/>
<line x1="457.8" y1="565.5" x2="535.4" y2="600.7" stroke="#20209c" stroke-width="1.7"/>
<polygon points="613.1,583.0 541.6,603.6 542.6,613.8 755.3,712.1 754.8,700.4 828.9,672.0" fill="url(#g22)"/>
<polygon points="613.1,583.0 541.6,603.6 542.6,613.8 755.3,712.1 754.8,700.4 828.9,672.0" fill="url(#h22)"/>
<polygon points="541.6,603.6 754.8,700.4 755.3,712.1 542.6,613.8" fill="url(#f22)"/>
<polygon points="754.8,700.4 828.9,672.0 829.1,683.2 755.3,712.1" fill="url(#ge)"/>
<polyline points="754.8,700.4 755.3,712.1 542.6,613.8 541.6,603.6 613.1,583.0 828.9,672.0 829.1,683.2 755.3,712.1" fill="none" stroke="#20209c" stroke-width="1.7" stroke-linejoin="round"/>
<line x1="541.6" y1="603.6" x2="754.8" y2="700.4" stroke="#20209c" stroke-width="1.7"/>
<polygon points="836.1,675.0 762.0,703.7 762.5,715.4 1049.4,848.0 1050.3,834.7 1123.2,793.4" fill="url(#g23)"/>
<polygon points="836.1,675.0 762.0,703.7 762.5,715.4 1049.4,848.0 1050.3,834.7 1123.2,793.4" fill="url(#h23)"/>
<polygon points="762.0,703.7 1050.3,834.7 1049.4,848.0 762.5,715.4" fill="url(#f23)"/>
<polygon points="1050.3,834.7 1123.2,793.4 1122.0,806.1 1049.4,848.0" fill="url(#ge)"/>
<polyline points="1050.3,834.7 1049.4,848.0 762.5,715.4 762.0,703.7 836.1,675.0 1123.2,793.4 1122.0,806.1 1049.4,848.0" fill="none" stroke="#20209c" stroke-width="1.7" stroke-linejoin="round"/>
<line x1="762.0" y1="703.7" x2="1050.3" y2="834.7" stroke="#20209c" stroke-width="1.7"/>
<line x1="360.2" y1="521.1" x2="556.1" y2="610.1" stroke="#84245a" stroke-width="1.5"/>
<line x1="360.2" y1="521.1" x2="548.0" y2="479.4" stroke="url(#gob)" stroke-width="1.6"/>
<line x1="631.7" y1="460.8" x2="801.1" y2="423.2" stroke="url(#gob)" stroke-width="1.6"/>
<polyline points="1049.4,848.0 1050.3,834.7 1478.7,592.0 1477.3,601.3" fill="none" stroke="#20209c" stroke-width="1.7" stroke-linejoin="round"/>
<line x1="1051.8" y1="835.4" x2="1080.3" y2="848.3" stroke="#94585e" stroke-width="1.1"/>
</g>
</svg>
<svg width="0" height="0" style="position:absolute"><defs><symbol id="i_new" viewBox="0 0 24 24"><path d="M3 5 L12 3 L18 7 L16 17 L6 20 Z" fill="#d21f26"/><path d="M5 9 L13 7 M6 12 L12 10" stroke="#fff" stroke-width="1.3"/><circle cx="15" cy="16" r="5" fill="#fff" stroke="#111" stroke-width="1.6"/><path d="M15 13 V19 M12 16 H18" stroke="#111" stroke-width="1.8"/></symbol><symbol id="i_open" viewBox="0 0 24 24"><path d="M3 9 H9 L10 10 H19 L20 19 H4 Z" fill="#7d8274" stroke="#333" stroke-width="0.8"/><path d="M4 12 H21 L18 19 H4 Z" fill="#9aa08e" stroke="#333" stroke-width="0.8"/><path d="M5 8 V3 M3 5 L5 3 L7 5" stroke="#1e8a2a" stroke-width="2" fill="none"/><path d="M8 11 L14 9 L17 12" stroke="#c05060" stroke-width="1.2" fill="none"/></symbol><symbol id="i_save" viewBox="0 0 24 24"><rect x="4" y="4" width="16" height="16" rx="1.5" fill="#2a5eb5" stroke="#1a3a80" stroke-width="0.8"/><rect x="7" y="5" width="10" height="6" fill="#fff"/><rect x="8" y="14" width="8" height="5" fill="#d8dde8"/><rect x="9" y="15" width="2" height="3" fill="#333"/></symbol><symbol id="i_cut" viewBox="0 0 24 24"><path d="M7 13 L22 7 M12 18 L16 3" stroke="#333" stroke-width="1.7"/><circle cx="5" cy="13.5" r="2.4" fill="#fff" stroke="#3a1010" stroke-width="1.8"/><circle cx="11" cy="20" r="2.4" fill="#fff" stroke="#3a1010" stroke-width="1.8"/></symbol><symbol id="i_copy" viewBox="0 0 24 24"><path d="M4 5 L10 3 L13 7 L11 13 L5 14 Z" fill="#d21f26"/><path d="M10 10 L16 8 L19 12 L17 19 L11 20 Z" fill="#d21f26" stroke="#fff" stroke-width="0.8"/></symbol><symbol id="i_paste" viewBox="0 0 24 24"><path d="M7 4 H15 L18 7 V20 H7 Z" fill="#f4f4f4" stroke="#999" stroke-width="1"/><path d="M9 9 H15 M9 12 H15 M9 15 H13" stroke="#bbb" stroke-width="1"/></symbol><symbol id="i_delete" viewBox="0 0 24 24"><circle cx="12" cy="12" r="7.5" fill="none" stroke="#d21f26" stroke-width="2.2"/><path d="M8 8 L16 16 M16 8 L8 16" stroke="#d21f26" stroke-width="2.2"/></symbol><symbol id="i_undo" viewBox="0 0 24 24"><path d="M6 11 Q12 4 18 9 Q20 12 17 18 Q18 11 12 10 L10 14 Z" fill="#2f6fc6" stroke="#1c4f9c" stroke-width="0.6"/><path d="M4 10 L10 6 L10 15 Z" fill="#2f6fc6"/></symbol><symbol id="i_redo" viewBox="0 0 24 24"><path d="M18 11 Q12 4 6 9 Q4 12 7 18 Q6 11 12 10 L14 14 Z" fill="#b8b8b8"/><path d="M20 10 L14 6 L14 15 Z" fill="#b8b8b8"/></symbol><symbol id="i_print" viewBox="0 0 24 24"><rect x="6" y="3" width="11" height="7" fill="#fff" stroke="#444" stroke-width="1"/><path d="M3 10 H21 L19 18 H5 Z" fill="#333"/><rect x="6" y="15" width="12" height="5" fill="#666"/><path d="M5 11 H19" stroke="#888" stroke-width="1"/></symbol><symbol id="i_minfo" viewBox="0 0 24 24"><path d="M3 5 L12 3 L18 7 L16 17 L6 20 Z" fill="#d21f26"/><path d="M5 9 L13 7 M6 12 L12 10" stroke="#fff" stroke-width="1.3"/><circle cx="15.5" cy="15.5" r="5.5" fill="#1f55a8" stroke="#fff" stroke-width="0.8"/><path d="M15.5 13 V19" stroke="#fff" stroke-width="1.8"/><circle cx="15.5" cy="11.5" r="0.9" fill="#fff"/></symbol><symbol id="i_orbit" viewBox="0 0 24 24"><path d="M11 6 Q3 7 3 12 Q3 17 11 18 L11 21 L15 16 L11 12 L11 15 Q7 14 7 12 Q7 10 11 9 Z" fill="#d21f26" stroke="#8e1b1f" stroke-width="0.7"/><path d="M13 4 Q21 6 21 11 Q21 16 14 17 L14 14 Q17 13 17 11 Q17 8 13 7 L13 10 L9 6 L13 1 Z" fill="#3aa04a" stroke="#1f6b2b" stroke-width="0.7"/><path d="M12 1 V23" stroke="#111" stroke-width="1.3"/></symbol><symbol id="i_pan" viewBox="0 0 24 24"><path d="M5 18 Q3 12 6 8 L9 5 Q11 4 11 6 L10 9 L14 4 Q16 3 16 5 L13 10 L18 6 Q20 6 19 8 L15 13 L19 11 Q20 13 18 14 Q14 19 9 20 Q6 20 5 18 Z" fill="#efe0b0" stroke="#b8a070" stroke-width="0.9"/></symbol><symbol id="i_zoom" viewBox="0 0 24 24"><path d="M4 20 L10 14" stroke="#111" stroke-width="3" stroke-linecap="round"/><circle cx="14" cy="10" r="5.5" fill="#b8d4f0" stroke="#1a3050" stroke-width="1.6"/><circle cx="14" cy="10" r="2" fill="#dbeafa"/></symbol><symbol id="i_zoomwin" viewBox="0 0 24 24"><rect x="4" y="4" width="16" height="16" fill="none" stroke="#d21f26" stroke-width="1.3"/><path d="M4 20 L10 14" stroke="#111" stroke-width="2.6"/><circle cx="14" cy="10" r="5" fill="#b8d4f0" stroke="#1a3050" stroke-width="1.5"/></symbol><symbol id="i_zoomext" viewBox="0 0 24 24"><path d="M5 19 L10 14" stroke="#111" stroke-width="2.6"/><circle cx="13" cy="11" r="4" fill="#b8d4f0" stroke="#1a3050" stroke-width="1.4"/><path d="M2 2 L7 2 L2 7 Z M22 2 L17 2 L22 7 Z M22 22 L17 22 L22 17 Z" fill="#d21f26"/><path d="M3 3 L7 7 M21 3 L17 7 M21 21 L17 17" stroke="#d21f26" stroke-width="1.5"/></symbol><symbol id="i_prev" viewBox="0 0 24 24"><circle cx="10" cy="10" r="5.5" fill="#3d8de0" stroke="#1a4a90" stroke-width="1.4"/><path d="M10 6 Q16 4 19 10 L21 8 L20 15 L14 13 L17 12 Q15 7 10 9 Z" fill="#2f7ad0"/><path d="M14 15 L19 20" stroke="#111" stroke-width="2.5"/></symbol><symbol id="i_poscam" viewBox="0 0 24 24"><ellipse cx="12" cy="5" rx="1.8" ry="2.2" fill="none" stroke="#666" stroke-width="1"/><path d="M10.5 8 Q9 13 11 16 M13.5 8 Q15 13 13 16" stroke="#666" stroke-width="1" fill="none"/><path d="M9 21 L12 16 L15 21 M9 18 H15" stroke="#d21f26" stroke-width="1.3" fill="none"/></symbol><symbol id="i_look" viewBox="0 0 24 24"><path d="M2 12 Q12 3 22 12 Q12 19 2 12 Z" fill="#fff" stroke="#111" stroke-width="1.6"/><circle cx="12" cy="11.5" r="3.8" fill="#222"/><path d="M3 9 Q12 1 21 9" stroke="#333" stroke-width="1" fill="none"/></symbol><symbol id="i_walk" viewBox="0 0 24 24"><ellipse cx="8" cy="10" rx="3" ry="5" fill="#111"/><ellipse cx="8" cy="18.5" rx="2.2" ry="2.5" fill="#111"/><ellipse cx="16" cy="7" rx="3" ry="5" fill="#111"/><ellipse cx="16" cy="15.5" rx="2.2" ry="2.5" fill="#111"/></symbol><symbol id="i_interact" viewBox="0 0 24 24"><path d="M6 6 L12 10 L14 8 L18 15 L15 19 L10 17 L7 13 L10 13 Z" fill="#f4f4f4" stroke="#888" stroke-width="1.1"/></symbol><symbol id="i_doc" viewBox="0 0 24 24"><rect x="4" y="3" width="15" height="18" fill="#fff" stroke="#222" stroke-width="1.2"/><rect x="4" y="3" width="17" height="4" fill="#d21f26"/><path d="M7 11 H16 M7 14 H16 M7 17 H14" stroke="#222" stroke-width="1.3"/></symbol><symbol id="i_green" viewBox="0 0 24 24"><rect x="3" y="4" width="6" height="7" fill="#3cbf3c" stroke="#1a7a1a" stroke-width="0.8"/><rect x="3" y="13" width="6" height="7" fill="#3cbf3c" stroke="#1a7a1a" stroke-width="0.8"/><path d="M11 5 L21 12 L11 19 Z" fill="#3cbf3c" stroke="#1a7a1a" stroke-width="0.8"/></symbol><symbol id="i_move" viewBox="0 0 24 24"><path d="M12 2 L16 6 L13 6 L13 11 L18 11 L18 8 L22 12 L18 16 L18 13 L13 13 L13 18 L16 18 L12 22 L8 18 L11 18 L11 13 L6 13 L6 16 L2 12 L6 8 L6 11 L11 11 L11 6 L8 6 Z" fill="#d21f26" stroke="#8e1b1f" stroke-width="0.5"/></symbol><symbol id="i_push" viewBox="0 0 24 24"><path d="M2 15 L12 10 L22 15 L12 20 Z" fill="#8a8a7a" stroke="#333" stroke-width="1"/><path d="M2 15 L12 20 L22 15 L22 17 L12 22 L2 17 Z" fill="#555"/><path d="M12 14 V7" stroke="#d21f26" stroke-width="2.5"/><path d="M8 8 L12 2 L16 8 Z" fill="#d21f26"/></symbol><symbol id="i_rotate" viewBox="0 0 24 24"><path d="M4 11 Q5 4 12 4 Q17 4 19 8 L21 6 L21 12 L15 12 L17 10 Q15 7 12 7 Q8 7 7 11 Z" fill="#d21f26"/><path d="M20 13 Q19 20 12 20 Q7 20 5 16 L3 18 L3 12 L9 12 L7 14 Q9 17 12 17 Q16 17 17 13 Z" fill="#d21f26"/></symbol><symbol id="i_follow" viewBox="0 0 24 24"><path d="M3 14 Q3 5 12 4 Q21 4 21 12 L17 14 Q17 8 12 8 Q7 8 7 14 Z" fill="#9a3a3a" stroke="#222" stroke-width="1.2"/><path d="M5 14 Q6 9 12 9 Q15 9 16 12" stroke="#e8c8c8" stroke-width="1" fill="none"/><path d="M12 14 L18 14 L15 20 Z" fill="#d21f26"/></symbol><symbol id="i_scale" viewBox="0 0 24 24"><rect x="3" y="7" width="14" height="14" fill="#9c9a88" stroke="#333" stroke-width="1"/><path d="M3 21 L17 7" stroke="#c8c6b4" stroke-width="1"/><rect x="17" y="3" width="4" height="18" fill="#fff" stroke="#d21f26" stroke-width="0.8"/><path d="M10 14 L18 6" stroke="#d21f26" stroke-width="2.5"/><path d="M14 3 L21 3 L21 10 Z" fill="#d21f26"/></symbol><symbol id="i_offset" viewBox="0 0 24 24"><path d="M3 10 Q10 2 20 6" stroke="#d21f26" stroke-width="1.8" fill="none"/><path d="M6 16 Q9 9 15 10" stroke="#333" stroke-width="1.5" fill="none"/><path d="M13 20 Q21 16 19 8" stroke="#d21f26" stroke-width="1.8" fill="none"/><path d="M12 14 L20 7 L21 14 Z" fill="#d21f26"/></symbol><symbol id="i_pencil" viewBox="0 0 24 24"><path d="M4 20 L6 15 L17 4 L20 7 L9 18 Z" fill="#d21f26" stroke="#5a1010" stroke-width="1"/><path d="M4 20 L6 15 L9 18 Z" fill="#444"/></symbol><symbol id="i_freehand" viewBox="0 0 24 24"><path d="M4 19 Q2 13 8 13 Q14 13 10 8 Q7 4 13 4 Q18 5 16 10 Q14 15 19 15" stroke="#d21f26" stroke-width="1.7" fill="none"/><circle cx="4" cy="19" r="1.5" fill="#d21f26"/><circle cx="19" cy="5" r="1.5" fill="#d21f26"/></symbol><symbol id="i_rect" viewBox="0 0 24 24"><rect x="5" y="4" width="13" height="16" fill="#9e9684" stroke="#444" stroke-width="0.8"/><path d="M5 20 L18 4" stroke="#c8bca8" stroke-width="1.5"/><circle cx="5" cy="20" r="1.5" fill="#d21f26"/><circle cx="18" cy="4" r="1.5" fill="#d21f26"/></symbol><symbol id="i_rotrect" viewBox="0 0 24 24"><rect x="5" y="4" width="14" height="16" fill="#9e9684" stroke="#d21f26" stroke-width="0.8"/><circle cx="5" cy="4" r="1.4" fill="#d21f26"/><circle cx="19" cy="4" r="1.4" fill="#d21f26"/><circle cx="5" cy="20" r="1.4" fill="#d21f26"/><circle cx="19" cy="20" r="1.4" fill="#d21f26"/></symbol><symbol id="i_circle" viewBox="0 0 24 24"><circle cx="12" cy="12" r="8" fill="#9e9684" stroke="#555" stroke-width="1"/><circle cx="12" cy="12" r="5" fill="none" stroke="#b8ae9c" stroke-width="1"/><circle cx="12" cy="12" r="1.5" fill="#d21f26"/><path d="M12 12 L18 7" stroke="#d21f26" stroke-width="0.8"/></symbol><symbol id="i_polygon" viewBox="0 0 24 24"><path d="M12 3 L19 7 L20 15 L13 21 L5 18 L4 9 Z" fill="#9e9684" stroke="#d21f26" stroke-width="1.2"/><circle cx="12" cy="12" r="3" fill="none" stroke="#c8bca8" stroke-width="1.2"/><circle cx="12" cy="12" r="1.3" fill="#d21f26"/></symbol><symbol id="i_arc" viewBox="0 0 24 24"><path d="M4 19 Q14 18 19 5" stroke="#333" stroke-width="1.4" fill="none"/><path d="M4 19 L14 8 M6 5 L19 5" stroke="#d21f26" stroke-width="1" fill="none"/><circle cx="4" cy="19" r="1.4" fill="#d21f26"/><circle cx="19" cy="5" r="1.4" fill="#d21f26"/><circle cx="6" cy="5" r="1.2" fill="#d21f26"/></symbol><symbol id="i_arc2" viewBox="0 0 24 24"><path d="M4 19 Q3 6 13 4 L20 12" stroke="#333" stroke-width="1.4" fill="none"/><path d="M4 19 L20 12" stroke="#d21f26" stroke-width="1.2"/><circle cx="4" cy="19" r="1.4" fill="#d21f26"/><circle cx="20" cy="12" r="1.4" fill="#d21f26"/><circle cx="13" cy="4" r="1.2" fill="#d21f26"/></symbol><symbol id="i_arc3" viewBox="0 0 24 24"><path d="M4 12 Q5 20 12 20 Q20 19 19 11" stroke="#333" stroke-width="1.4" fill="none"/><path d="M10 4 L19 11 M10 4 L12 20" stroke="#d21f26" stroke-width="1"/><circle cx="4" cy="12" r="1.3" fill="#d21f26"/><circle cx="10" cy="4" r="1.2" fill="#d21f26"/><circle cx="12" cy="20" r="1.3" fill="#d21f26"/></symbol><symbol id="i_pie" viewBox="0 0 24 24"><path d="M5 20 L5 5 Q19 5 19 19 Z" fill="#9e9684" stroke="#555" stroke-width="1"/><path d="M5 5 L19 19" stroke="#d21f26" stroke-width="0.8"/><circle cx="5" cy="5" r="1.3" fill="#d21f26"/><circle cx="5" cy="20" r="1.3" fill="#d21f26"/><circle cx="19" cy="19" r="1.3" fill="#d21f26"/></symbol><symbol id="i_tape" viewBox="0 0 24 24"><path d="M13 3 Q21 4 20 11 L11 17 Q6 15 8 9 Z" fill="#e8d820" stroke="#222" stroke-width="1.4"/><path d="M9 15 L3 20" stroke="#222" stroke-width="2.5"/><rect x="2" y="18" width="4" height="3" fill="#e8d820" stroke="#222" stroke-width="0.8"/><path d="M12 8 L15 12" stroke="#666" stroke-width="1"/></symbol><symbol id="i_dim" viewBox="0 0 24 24"><path d="M3 13 L10 5 M12 3 L20 12 M5 21 L10 16 M14 13 L20 18" stroke="#222" stroke-width="1.3"/><path d="M6 8 L9 4 M8 7 L9 10" stroke="#333" stroke-width="1"/><text x="6" y="9" font-size="6" fill="#222" font-family="Liberation Sans">?</text></symbol><symbol id="i_protractor" viewBox="0 0 24 24"><path d="M3 19 Q4 5 18 3 L21 6 Z" fill="#e8d820" stroke="#222" stroke-width="1.4"/><path d="M8 15 Q10 9 16 7" stroke="#555" stroke-width="1.2" fill="none"/></symbol><symbol id="i_text" viewBox="0 0 24 24"><rect x="6" y="3" width="15" height="11" fill="#fff" stroke="#333" stroke-width="1"/><text x="8" y="12" font-size="8" font-weight="bold" fill="#222" font-family="Liberation Serif">A1</text><path d="M4 8 V21" stroke="#333" stroke-width="1"/><path d="M2 18 L4 22 L6 18 Z" fill="#222"/></symbol><symbol id="i_axes" viewBox="0 0 24 24"><path d="M12 12 V3" stroke="#2255cc" stroke-width="2"/><path d="M9 6 L12 2 L15 6 Z" fill="#2255cc"/><path d="M12 12 L20 17" stroke="#d21f26" stroke-width="2"/><path d="M12 12 L20 8" stroke="#2aa040" stroke-width="2"/><path d="M12 12 L4 16 M12 12 L4 8 M12 12 V20" stroke="#999" stroke-width="1" stroke-dasharray="1,1.5"/></symbol><symbol id="i_text3d" viewBox="0 0 24 24"><path d="M9 3 L14 3 L19 16 L22 18 L21 21 L14 19 L13 15 L10 15 L9 19 L4 21 L4 18 L6 16 Z" fill="#4a4a4a" stroke="#222" stroke-width="0.9"/><path d="M10.5 12 L11.5 7 L12.5 12 Z" fill="#bbb"/><path d="M14 3 L16 4 L21 17" stroke="#888" stroke-width="0.8" fill="none"/><path d="M7 17 H17" stroke="#777" stroke-width="0.6"/></symbol><symbol id="i_select" viewBox="0 0 24 24"><path d="M8 4 L8 19 L11.5 15.5 L14 21 L16 20 L13.5 14.5 L18 14.5 Z" fill="#111"/></symbol><symbol id="i_eraser" viewBox="0 0 24 24"><path d="M3 15 L11 4 L21 9 L14 21 Z" fill="#f4a8c0" stroke="#7a3050" stroke-width="1.2"/><path d="M11 4 L21 9 L19 12 L9 7 Z" fill="#f8c8d8"/><path d="M11 10 L15 5" stroke="#c06080" stroke-width="1"/></symbol><symbol id="i_paint" viewBox="0 0 24 24"><path d="M3 17 Q4 10 10 6 L13 9 Q8 15 6 20 Z" fill="#f0c020" stroke="#222" stroke-width="1"/><path d="M9 8 Q14 4 18 7 Q21 11 17 17 Q13 20 9 17 Z" fill="#8c9880" stroke="#111" stroke-width="1.4"/><circle cx="17" cy="7" r="3" fill="none" stroke="#111" stroke-width="1.3"/><path d="M11 15 L15 13" stroke="#e8e0c0" stroke-width="1.3"/></symbol><symbol id="i_wh3d" viewBox="0 0 24 24"><path d="M2 10 L8 6 L16 5 L22 9 L20 17 L12 21 L4 18 Z" fill="#222"/><path d="M4 9 L10 5 L18 6 L20 10 L18 16 L11 19 L5 16 Z" fill="#d21f26" stroke="#5a0a0a" stroke-width="0.8"/><path d="M9 9 H14 V11 H10 V13 H14 V16 H9" stroke="#fff" stroke-width="1.4" fill="none"/><path d="M15 9 L18 12 L15 15" stroke="#f4c0c0" stroke-width="1" fill="none"/></symbol><symbol id="i_whext" viewBox="0 0 24 24"><path d="M2 14 L11 10 L22 13 L13 19 Z" fill="#333"/><path d="M3 11 L11 6 L21 10 L13 16 Z" fill="#d21f26" stroke="#4a0a0a" stroke-width="1"/><path d="M5 9 L12 5 L19 8 L12 12 Z" fill="#e83a3a" stroke="#4a0a0a" stroke-width="0.6"/><path d="M10 9 L14 8" stroke="#fff" stroke-width="1.2"/></symbol><symbol id="i_layout" viewBox="0 0 24 24"><rect x="3" y="3" width="14" height="17" fill="#fff" stroke="#d21f26" stroke-width="1.5"/><path d="M5 7 H15 M5 10 H10 M12 10 V18" stroke="#d21f26" stroke-width="1.3"/><path d="M11 17 L18 17 L18 14 L23 18.5 L18 23 L18 20 L11 20 Z" fill="#1a7ad8"/></symbol><symbol id="i_extmgr" viewBox="0 0 24 24"><path d="M3 9 L8 4 L16 4 L21 9 L12 18 Z" fill="#d21f26" stroke="#5a0a0a" stroke-width="0.8"/><path d="M8 4 L12 9 L16 4 M3 9 H21" stroke="#f08080" stroke-width="0.8" fill="none"/><circle cx="17" cy="17" r="4" fill="#d21f26" stroke="#fff" stroke-width="1"/><circle cx="17" cy="17" r="1.5" fill="#fff"/></symbol><symbol id="i_profile" viewBox="0 0 24 24"><circle cx="12" cy="12" r="9.5" fill="#fff" stroke="#777" stroke-width="1.2"/><circle cx="12" cy="9" r="3.3" fill="none" stroke="#777" stroke-width="1.2"/><path d="M5.5 18 Q12 11 18.5 18" stroke="#777" stroke-width="1.2" fill="none"/><circle cx="17.5" cy="18" r="4" fill="#2ea44f"/><path d="M15.5 18 L17 19.5 L19.5 16.5" stroke="#fff" stroke-width="1.3" fill="none"/></symbol><symbol id="i_iso" viewBox="0 0 24 24"><path d="M4 11 L12 5 L20 9 L20 18 L11 21 L4 17 Z" fill="#e8e8e8" stroke="#333" stroke-width="1"/><path d="M4 11 L12 5 L20 9 L12 14 Z" fill="#8a8a8a" stroke="#333" stroke-width="1"/><rect x="7" y="15" width="3" height="4" fill="#333"/></symbol><symbol id="i_top" viewBox="0 0 24 24"><rect x="4" y="4" width="15" height="17" fill="#b0ac9c" stroke="#333" stroke-width="1"/><path d="M11.5 4 V21" stroke="#666" stroke-width="1"/><rect x="15" y="6" width="3" height="4" fill="#fff" stroke="#333" stroke-width="0.6"/></symbol><symbol id="i_front" viewBox="0 0 24 24"><path d="M3 12 L12 4 L21 12" stroke="#111" stroke-width="2" fill="none"/><path d="M6 11 V20 H18 V11" stroke="#111" stroke-width="2" fill="#fff"/><rect x="10" y="14" width="4" height="6" fill="#111"/></symbol><symbol id="i_right" viewBox="0 0 24 24"><path d="M4 9 H20 V20 H4 Z" fill="#fff" stroke="#111" stroke-width="1.8"/><path d="M3 9 L6 5 H18 L21 9" fill="#777" stroke="#111" stroke-width="1.3"/><path d="M4 13 H20" stroke="#111" stroke-width="1.2"/><rect x="14" y="2" width="4" height="5" fill="#fff" stroke="#111" stroke-width="0.8"/></symbol><symbol id="i_back" viewBox="0 0 24 24"><path d="M3 12 L12 4 L21 12" stroke="#111" stroke-width="2" fill="none"/><path d="M6 11 V20 H18 V11" stroke="#111" stroke-width="2" fill="#fff"/></symbol><symbol id="i_left" viewBox="0 0 24 24"><path d="M4 9 H20 V20 H4 Z" fill="#fff" stroke="#111" stroke-width="1.8"/><path d="M3 9 L6 5 H18 L21 9" fill="#777" stroke="#111" stroke-width="1.3"/><path d="M4 13 H20" stroke="#111" stroke-width="1.2"/></symbol><symbol id="i_component" viewBox="0 0 24 24"><path d="M3 7 L12 3 L21 6 L20 17 L11 21 L4 18 Z" fill="none" stroke="#b0b0b0" stroke-width="1.8"/><path d="M6 8 L12 6 L18 8 L12 10 Z" fill="#fff" stroke="#999" stroke-width="0.8"/><path d="M6 8 L12 10 L12 18 L6 16 Z" fill="#bdbdbd" stroke="#999" stroke-width="0.8"/><path d="M12 10 L18 8 L18 15 L12 18 Z" fill="#9a9a9a" stroke="#888" stroke-width="0.8"/></symbol><symbol id="i_dd" viewBox="0 0 24 24"><path d="M7 10 L17 10 L12 15 Z" fill="#111"/></symbol><symbol id="i_section" viewBox="0 0 24 24"><circle cx="12" cy="12" r="7" fill="none" stroke="#222" stroke-width="1.4"/><path d="M2 12 H22 M12 5 V19" stroke="#222" stroke-width="1.3"/><path d="M19 9 L23 12 L19 15 Z" fill="#222"/></symbol><symbol id="i_logo" viewBox="0 0 24 24"><path d="M2 7 L13 2 L22 8 L20 19 L9 22 L2 16 Z" fill="#d0202a"/><path d="M5 10 L14 6 L18 9 M6 14 L13 11 L16 13" stroke="#fff" stroke-width="2" fill="none"/></symbol><symbol id="i_pin" viewBox="0 0 24 24"><rect x="8" y="3" width="8" height="9" fill="#111"/><rect x="10" y="5" width="3" height="5" fill="#fff"/><path d="M6 12 H18 M12 12 V21" stroke="#111" stroke-width="2"/></symbol><symbol id="i_close" viewBox="0 0 24 24"><rect x="2" y="2" width="20" height="20" rx="2" fill="#e8b0a8" stroke="#8a3030" stroke-width="2"/><rect x="7" y="8" width="10" height="8" fill="#6a2020"/><rect x="9" y="10" width="6" height="4" fill="#e8b0a8"/></symbol><symbol id="i_x" viewBox="0 0 24 24"><rect x="2" y="2" width="20" height="20" rx="3" fill="#fff" stroke="#555" stroke-width="2"/><path d="M8 9 L16 16 M16 9 L8 16" stroke="#222" stroke-width="2.4"/></symbol><symbol id="i_eye" viewBox="0 0 24 24"><path d="M2 12 Q12 4 22 12 Q12 20 2 12 Z" fill="#fff" stroke="#111" stroke-width="2"/><circle cx="12" cy="12" r="3.5" fill="#111"/></symbol><symbol id="i_lock" viewBox="0 0 24 24"><rect x="3" y="11" width="11" height="9" fill="#fff" stroke="#111" stroke-width="2"/><path d="M9 11 V7 Q9 3 13 3 Q17 3 17 7 V9" stroke="#111" stroke-width="2" fill="none"/></symbol><symbol id="i_shadow1" viewBox="0 0 24 24"><path d="M5 8 L13 4 L19 9 L19 17 L11 21 L5 16 Z" fill="#fff" stroke="#111" stroke-width="1.5"/><path d="M5 8 L13 4 L19 9 L11 13 Z" fill="#222"/></symbol><symbol id="i_shadow2" viewBox="0 0 24 24"><path d="M5 6 L12 3 L15 15 L8 18 Z" fill="#fff" stroke="#111" stroke-width="1.5"/><path d="M8 18 L15 15 L20 19 L13 22 Z" fill="#111"/></symbol><symbol id="i_bucket" viewBox="0 0 24 24"><path d="M9 2 H15 L12 6 Z" fill="#111"/><rect x="6" y="9" width="12" height="12" fill="#111"/><rect x="9" y="13" width="6" height="5" fill="#fff"/></symbol><symbol id="i_cyl" viewBox="0 0 24 24"><ellipse cx="13" cy="7" rx="8" ry="4" fill="#111"/><rect x="5" y="7" width="16" height="11" fill="#111"/><ellipse cx="13" cy="7" rx="5" ry="2" fill="#fff"/><circle cx="8" cy="17" r="5" fill="#fff" stroke="#111" stroke-width="2"/><path d="M6 15 L11 17 L6 19 Z" fill="#111"/></symbol><symbol id="i_dropper" viewBox="0 0 24 24"><path d="M3 21 L14 10" stroke="#333" stroke-width="2"/><path d="M12 8 L18 2 L22 6 L16 12 Z" fill="#111"/><path d="M3 21 L14 10" stroke="#aaa" stroke-width="0.8"/></symbol><symbol id="i_larr" viewBox="0 0 24 24"><path d="M3 12 L11 4 V8 H20 V16 H11 V20 Z" fill="#fff" stroke="#999" stroke-width="1.5"/></symbol><symbol id="i_rarr" viewBox="0 0 24 24"><path d="M21 12 L13 4 V8 H4 V16 H13 V20 Z" fill="#fff" stroke="#999" stroke-width="1.5"/></symbol><symbol id="i_house" viewBox="0 0 24 24"><path d="M2 12 L12 3 L22 12" stroke="#111" stroke-width="2.5" fill="none"/><path d="M5 11 V21 H19 V11" stroke="#111" stroke-width="2.5" fill="#fff"/><rect x="10" y="14" width="4" height="7" fill="#111"/></symbol><symbol id="i_detail" viewBox="0 0 24 24"><rect x="3" y="6" width="14" height="13" fill="#fff" stroke="#111" stroke-width="2.4"/><rect x="6" y="9" width="6" height="7" fill="#aac"/><path d="M15 3 L23 12 L15 21 Z" fill="#111"/></symbol><symbol id="i_grid" viewBox="0 0 24 24"><path d="M3 5 H9 V10 H3 Z M12 5 H18 V10 H12 Z M3 14 H9 V19 H3 Z M12 14 H18 V19 H12 Z" fill="none" stroke="#555" stroke-width="1.5"/></symbol><symbol id="i_search" viewBox="0 0 24 24"><circle cx="14" cy="9" r="5" fill="none" stroke="#111" stroke-width="2"/><path d="M10 13 L4 20" stroke="#111" stroke-width="2.5"/></symbol><symbol id="i_stylesave" viewBox="0 0 24 24"><rect x="5" y="3" width="14" height="8" fill="#111"/><rect x="8" y="5" width="8" height="4" fill="#fff"/><path d="M4 14 H20 L12 21 Z" fill="#111"/></symbol><symbol id="i_styleadd" viewBox="0 0 24 24"><circle cx="9" cy="15" r="6" fill="#fff" stroke="#111" stroke-width="2"/><path d="M9 11 V19 M5 15 H13" stroke="#111" stroke-width="2"/><rect x="14" y="3" width="6" height="9" fill="#2a2ab0"/><path d="M11 6 L15 4" stroke="#111" stroke-width="1.5"/></symbol><symbol id="i_refresh" viewBox="0 0 24 24"><path d="M4 11 Q5 4 12 4 Q17 4 19 8 L21 5 V12 H14 L17 10 Q15 7 12 7 Q8 7 7 11 Z" fill="#111"/><path d="M20 13 Q19 20 12 20 Q7 20 5 16 L3 19 V12 H10 L7 14 Q9 17 12 17 Q16 17 17 13 Z" fill="#111"/></symbol><symbol id="i_uparr" viewBox="0 0 24 24"><path d="M5 15 L12 8 L19 15 Z" fill="#222"/></symbol><symbol id="i_dnarr" viewBox="0 0 24 24"><path d="M5 9 L12 16 L19 9 Z" fill="#222"/></symbol></defs></svg>
<div class="a" style="left:0px;top:30px;width:312px;height:28px;border:1px solid #dadada;border-top-color:#fcfcfc;border-left-color:#fcfcfc;background:#f0f0f0"></div>
<div class="a" style="left:0px;top:58px;width:913px;height:29px;border:1px solid #dadada;border-top-color:#fcfcfc;border-left-color:#fcfcfc;background:#f0f0f0"></div>
<div class="a" style="left:0px;top:87px;width:841px;height:29px;border:1px solid #dadada;border-top-color:#fcfcfc;border-left-color:#fcfcfc;background:#f0f0f0"></div>
<div class="a" style="left:3px;top:34px;width:2px;height:20px;background:repeating-linear-gradient(180deg,#a0a0a0 0,#a0a0a0 1px,transparent 1px,transparent 3px)"></div>
<div class="a" style="left:3px;top:62px;width:2px;height:20px;background:repeating-linear-gradient(180deg,#a0a0a0 0,#a0a0a0 1px,transparent 1px,transparent 3px)"></div>
<div class="a" style="left:3px;top:91px;width:2px;height:20px;background:repeating-linear-gradient(180deg,#a0a0a0 0,#a0a0a0 1px,transparent 1px,transparent 3px)"></div>
<svg class="a" style="left:6.0px;top:32.0px" width="24" height="24" viewBox="0 0 24 24"><use href="#i_new"/></svg>
<svg class="a" style="left:31.0px;top:32.0px" width="24" height="24" viewBox="0 0 24 24"><use href="#i_open"/></svg>
<svg class="a" style="left:57.0px;top:32.0px" width="24" height="24" viewBox="0 0 24 24"><use href="#i_save"/></svg>
<svg class="a" style="left:89.0px;top:32.0px" width="24" height="24" viewBox="0 0 24 24"><use href="#i_cut"/></svg>
<svg class="a" style="left:114.0px;top:32.0px" width="24" height="24" viewBox="0 0 24 24"><use href="#i_copy"/></svg>
<svg class="a" style="left:139.0px;top:32.0px" width="24" height="24" viewBox="0 0 24 24"><use href="#i_paste"/></svg>
<svg class="a" style="left:165.0px;top:32.0px" width="24" height="24" viewBox="0 0 24 24"><use href="#i_delete"/></svg>
<svg class="a" style="left:196.0px;top:32.0px" width="24" height="24" viewBox="0 0 24 24"><use href="#i_undo"/></svg>
<svg class="a" style="left:222.0px;top:32.0px" width="24" height="24" viewBox="0 0 24 24"><use href="#i_redo"/></svg>
<svg class="a" style="left:253.0px;top:32.0px" width="24" height="24" viewBox="0 0 24 24"><use href="#i_print"/></svg>
<svg class="a" style="left:285.0px;top:32.0px" width="24" height="24" viewBox="0 0 24 24"><use href="#i_minfo"/></svg>
<div class="a" style="left:85px;top:33px;width:2px;height:22px;background:#8c8c8c;border-right:1px solid #fff"></div>
<div class="a" style="left:193px;top:33px;width:2px;height:22px;background:#8c8c8c;border-right:1px solid #fff"></div>
<div class="a" style="left:249px;top:33px;width:2px;height:22px;background:#8c8c8c;border-right:1px solid #fff"></div>
<div class="a" style="left:281px;top:33px;width:2px;height:22px;background:#8c8c8c;border-right:1px solid #fff"></div>
<svg class="a" style="left:6.0px;top:60.0px" width="24" height="24" viewBox="0 0 24 24"><use href="#i_orbit"/></svg>
<svg class="a" style="left:32.0px;top:60.0px" width="24" height="24" viewBox="0 0 24 24"><use href="#i_pan"/></svg>
<svg class="a" style="left:57.0px;top:60.0px" width="24" height="24" viewBox="0 0 24 24"><use href="#i_zoom"/></svg>
<svg class="a" style="left:83.0px;top:60.0px" width="24" height="24" viewBox="0 0 24 24"><use href="#i_zoomwin"/></svg>
<svg class="a" style="left:109.0px;top:60.0px" width="24" height="24" viewBox="0 0 24 24"><use href="#i_zoomext"/></svg>
<svg class="a" style="left:134.0px;top:60.0px" width="24" height="24" viewBox="0 0 24 24"><use href="#i_prev"/></svg>
<svg class="a" style="left:159.0px;top:60.0px" width="24" height="24" viewBox="0 0 24 24"><use href="#i_poscam"/></svg>
<svg class="a" style="left:185.0px;top:60.0px" width="24" height="24" viewBox="0 0 24 24"><use href="#i_look"/></svg>
<svg class="a" style="left:210.0px;top:60.0px" width="24" height="24" viewBox="0 0 24 24"><use href="#i_walk"/></svg>
<svg class="a" style="left:246.0px;top:60.0px" width="24" height="24" viewBox="0 0 24 24"><use href="#i_interact"/></svg>
<svg class="a" style="left:270.0px;top:60.0px" width="24" height="24" viewBox="0 0 24 24"><use href="#i_doc"/></svg>
<svg class="a" style="left:296.0px;top:60.0px" width="24" height="24" viewBox="0 0 24 24"><use href="#i_green"/></svg>
<svg class="a" style="left:331.0px;top:60.0px" width="24" height="24" viewBox="0 0 24 24"><use href="#i_move"/></svg>
<svg class="a" style="left:356.0px;top:60.0px" width="24" height="24" viewBox="0 0 24 24"><use href="#i_push"/></svg>
<svg class="a" style="left:382.0px;top:60.0px" width="24" height="24" viewBox="0 0 24 24"><use href="#i_rotate"/></svg>
<svg class="a" style="left:408.0px;top:60.0px" width="24" height="24" viewBox="0 0 24 24"><use href="#i_follow"/></svg>
<svg class="a" style="left:433.0px;top:60.0px" width="24" height="24" viewBox="0 0 24 24"><use href="#i_scale"/></svg>
<svg class="a" style="left:459.0px;top:60.0px" width="24" height="24" viewBox="0 0 24 24"><use href="#i_offset"/></svg>
<svg class="a" style="left:492.0px;top:60.0px" width="24" height="24" viewBox="0 0 24 24"><use href="#i_pencil"/></svg>
<svg class="a" style="left:518.0px;top:60.0px" width="24" height="24" viewBox="0 0 24 24"><use href="#i_freehand"/></svg>
<svg class="a" style="left:544.0px;top:60.0px" width="24" height="24" viewBox="0 0 24 24"><use href="#i_rect"/></svg>
<svg class="a" style="left:569.0px;top:60.0px" width="24" height="24" viewBox="0 0 24 24"><use href="#i_rotrect"/></svg>
<svg class="a" style="left:595.0px;top:60.0px" width="24" height="24" viewBox="0 0 24 24"><use href="#i_circle"/></svg>
<svg class="a" style="left:621.0px;top:60.0px" width="24" height="24" viewBox="0 0 24 24"><use href="#i_polygon"/></svg>
<svg class="a" style="left:646.0px;top:60.0px" width="24" height="24" viewBox="0 0 24 24"><use href="#i_arc"/></svg>
<svg class="a" style="left:672.0px;top:60.0px" width="24" height="24" viewBox="0 0 24 24"><use href="#i_arc2"/></svg>
<svg class="a" style="left:698.0px;top:60.0px" width="24" height="24" viewBox="0 0 24 24"><use href="#i_arc3"/></svg>
<svg class="a" style="left:723.0px;top:60.0px" width="24" height="24" viewBox="0 0 24 24"><use href="#i_pie"/></svg>
<svg class="a" style="left:757.0px;top:60.0px" width="24" height="24" viewBox="0 0 24 24"><use href="#i_tape"/></svg>
<svg class="a" style="left:783.0px;top:60.0px" width="24" height="24" viewBox="0 0 24 24"><use href="#i_dim"/></svg>
<svg class="a" style="left:808.0px;top:60.0px" width="24" height="24" viewBox="0 0 24 24"><use href="#i_protractor"/></svg>
<svg class="a" style="left:835.0px;top:60.0px" width="24" height="24" viewBox="0 0 24 24"><use href="#i_text"/></svg>
<svg class="a" style="left:860.0px;top:60.0px" width="24" height="24" viewBox="0 0 24 24"><use href="#i_axes"/></svg>
<svg class="a" style="left:885.0px;top:60.0px" width="24" height="24" viewBox="0 0 24 24"><use href="#i_text3d"/></svg>
<div class="a" style="left:238px;top:60px;width:2px;height:25px;background:#8c8c8c;border-right:1px solid #fff"></div>
<div class="a" style="left:242px;top:62px;width:2px;height:20px;background:repeating-linear-gradient(180deg,#a0a0a0 0,#a0a0a0 1px,transparent 1px,transparent 3px)"></div>
<div class="a" style="left:323px;top:60px;width:2px;height:25px;background:#8c8c8c;border-right:1px solid #fff"></div>
<div class="a" style="left:327px;top:62px;width:2px;height:20px;background:repeating-linear-gradient(180deg,#a0a0a0 0,#a0a0a0 1px,transparent 1px,transparent 3px)"></div>
<div class="a" style="left:486px;top:60px;width:2px;height:25px;background:#8c8c8c;border-right:1px solid #fff"></div>
<div class="a" style="left:490px;top:62px;width:2px;height:20px;background:repeating-linear-gradient(180deg,#a0a0a0 0,#a0a0a0 1px,transparent 1px,transparent 3px)"></div>
<div class="a" style="left:752px;top:60px;width:2px;height:25px;background:#8c8c8c;border-right:1px solid #fff"></div>
<div class="a" style="left:756px;top:62px;width:2px;height:20px;background:repeating-linear-gradient(180deg,#a0a0a0 0,#a0a0a0 1px,transparent 1px,transparent 3px)"></div>
<div class="a" style="left:6px;top:90px;width:25px;height:23px;border:1px solid #707070;border-radius:3px;background:linear-gradient(180deg,#e4e4e4,#d4d4d4)"></div>
<svg class="a" style="left:6.0px;top:89.0px" width="24" height="24" viewBox="0 0 24 24"><use href="#i_select"/></svg>
<svg class="a" style="left:37.0px;top:89.0px" width="24" height="24" viewBox="0 0 24 24"><use href="#i_eraser"/></svg>
<svg class="a" style="left:64.0px;top:89.0px" width="24" height="24" viewBox="0 0 24 24"><use href="#i_pencil"/></svg>
<svg class="a" style="left:84.0px;top:89.0px" width="24" height="24" viewBox="0 0 24 24"><use href="#i_dd"/></svg>
<svg class="a" style="left:108.0px;top:89.0px" width="24" height="24" viewBox="0 0 24 24"><use href="#i_arc2"/></svg>
<svg class="a" style="left:127.0px;top:89.0px" width="24" height="24" viewBox="0 0 24 24"><use href="#i_dd"/></svg>
<svg class="a" style="left:148.0px;top:89.0px" width="24" height="24" viewBox="0 0 24 24"><use href="#i_rect"/></svg>
<svg class="a" style="left:169.0px;top:89.0px" width="24" height="24" viewBox="0 0 24 24"><use href="#i_dd"/></svg>
<svg class="a" style="left:195.0px;top:89.0px" width="24" height="24" viewBox="0 0 24 24"><use href="#i_push"/></svg>
<svg class="a" style="left:221.0px;top:89.0px" width="24" height="24" viewBox="0 0 24 24"><use href="#i_follow"/></svg>
<svg class="a" style="left:246.0px;top:89.0px" width="24" height="24" viewBox="0 0 24 24"><use href="#i_move"/></svg>
<svg class="a" style="left:272.0px;top:89.0px" width="24" height="24" viewBox="0 0 24 24"><use href="#i_rotate"/></svg>
<svg class="a" style="left:298.0px;top:89.0px" width="24" height="24" viewBox="0 0 24 24"><use href="#i_scale"/></svg>
<svg class="a" style="left:329.0px;top:89.0px" width="24" height="24" viewBox="0 0 24 24"><use href="#i_tape"/></svg>
<svg class="a" style="left:355.0px;top:89.0px" width="24" height="24" viewBox="0 0 24 24"><use href="#i_text"/></svg>
<svg class="a" style="left:380.0px;top:89.0px" width="24" height="24" viewBox="0 0 24 24"><use href="#i_paint"/></svg>
<svg class="a" style="left:411.0px;top:89.0px" width="24" height="24" viewBox="0 0 24 24"><use href="#i_orbit"/></svg>
<svg class="a" style="left:437.0px;top:89.0px" width="24" height="24" viewBox="0 0 24 24"><use href="#i_pan"/></svg>
<svg class="a" style="left:463.0px;top:89.0px" width="24" height="24" viewBox="0 0 24 24"><use href="#i_zoom"/></svg>
<svg class="a" style="left:489.0px;top:89.0px" width="24" height="24" viewBox="0 0 24 24"><use href="#i_zoomext"/></svg>
<svg class="a" style="left:520.0px;top:89.0px" width="24" height="24" viewBox="0 0 24 24"><use href="#i_wh3d"/></svg>
<svg class="a" style="left:546.0px;top:89.0px" width="24" height="24" viewBox="0 0 24 24"><use href="#i_whext"/></svg>
<svg class="a" style="left:572.0px;top:89.0px" width="24" height="24" viewBox="0 0 24 24"><use href="#i_layout"/></svg>
<svg class="a" style="left:603.0px;top:89.0px" width="24" height="24" viewBox="0 0 24 24"><use href="#i_extmgr"/></svg>
<svg class="a" style="left:636.0px;top:89.0px" width="24" height="24" viewBox="0 0 24 24"><use href="#i_profile"/></svg>
<svg class="a" style="left:655.0px;top:89.0px" width="24" height="24" viewBox="0 0 24 24"><use href="#i_dd"/></svg>
<svg class="a" style="left:685.0px;top:89.0px" width="24" height="24" viewBox="0 0 24 24"><use href="#i_iso"/></svg>
<svg class="a" style="left:710.0px;top:89.0px" width="24" height="24" viewBox="0 0 24 24"><use href="#i_top"/></svg>
<svg class="a" style="left:736.0px;top:89.0px" width="24" height="24" viewBox="0 0 24 24"><use href="#i_front"/></svg>
<svg class="a" style="left:761.0px;top:89.0px" width="24" height="24" viewBox="0 0 24 24"><use href="#i_right"/></svg>
<svg class="a" style="left:787.0px;top:89.0px" width="24" height="24" viewBox="0 0 24 24"><use href="#i_back"/></svg>
<svg class="a" style="left:813.0px;top:89.0px" width="24" height="24" viewBox="0 0 24 24"><use href="#i_left"/></svg>
<div class="a" style="left:34px;top:90px;width:2px;height:23px;background:#8c8c8c;border-right:1px solid #fff"></div>
<div class="a" style="left:191px;top:90px;width:2px;height:23px;background:#8c8c8c;border-right:1px solid #fff"></div>
<div class="a" style="left:325px;top:90px;width:2px;height:23px;background:#8c8c8c;border-right:1px solid #fff"></div>
<div class="a" style="left:407px;top:90px;width:2px;height:23px;background:#8c8c8c;border-right:1px solid #fff"></div>
<div class="a" style="left:516px;top:90px;width:2px;height:23px;background:#8c8c8c;border-right:1px solid #fff"></div>
<div class="a" style="left:599px;top:90px;width:2px;height:23px;background:#8c8c8c;border-right:1px solid #fff"></div>
<div class="a" style="left:630px;top:90px;width:2px;height:23px;background:#8c8c8c;border-right:1px solid #fff"></div>
<div class="a" style="left:678px;top:89px;width:2px;height:25px;background:#8c8c8c;border-right:1px solid #fff"></div>
<div class="a" style="left:682px;top:91px;width:2px;height:20px;background:repeating-linear-gradient(180deg,#a0a0a0 0,#a0a0a0 1px,transparent 1px,transparent 3px)"></div>
<div class="a" style="left:4px;top:119px;width:44px;height:2px;background:repeating-linear-gradient(90deg,#a0a0a0 0,#a0a0a0 1px,transparent 1px,transparent 3px)"></div>
<div class="a" style="left:0px;top:124px;width:25px;height:23px;border:1px solid #707070;border-radius:3px;background:linear-gradient(180deg,#e4e4e4,#d4d4d4)"></div>
<svg class="a" style="left:2.0px;top:124.0px" width="22" height="22" viewBox="0 0 24 24"><use href="#i_select"/></svg>
<svg class="a" style="left:27.0px;top:124.0px" width="22" height="22" viewBox="0 0 24 24"><use href="#i_component"/></svg>
<svg class="a" style="left:2.0px;top:149.0px" width="22" height="22" viewBox="0 0 24 24"><use href="#i_paint"/></svg>
<svg class="a" style="left:27.0px;top:149.0px" width="22" height="22" viewBox="0 0 24 24"><use href="#i_eraser"/></svg>
<svg class="a" style="left:2.0px;top:181.0px" width="22" height="22" viewBox="0 0 24 24"><use href="#i_pencil"/></svg>
<svg class="a" style="left:27.0px;top:181.0px" width="22" height="22" viewBox="0 0 24 24"><use href="#i_freehand"/></svg>
<svg class="a" style="left:2.0px;top:207.0px" width="22" height="22" viewBox="0 0 24 24"><use href="#i_rect"/></svg>
<svg class="a" style="left:27.0px;top:207.0px" width="22" height="22" viewBox="0 0 24 24"><use href="#i_rotrect"/></svg>
<svg class="a" style="left:2.0px;top:233.0px" width="22" height="22" viewBox="0 0 24 24"><use href="#i_circle"/></svg>
<svg class="a" style="left:27.0px;top:233.0px" width="22" height="22" viewBox="0 0 24 24"><use href="#i_polygon"/></svg>
<svg class="a" style="left:2.0px;top:259.0px" width="22" height="22" viewBox="0 0 24 24"><use href="#i_arc"/></svg>
<svg class="a" style="left:27.0px;top:259.0px" width="22" height="22" viewBox="0 0 24 24"><use href="#i_arc2"/></svg>
<svg class="a" style="left:2.0px;top:284.0px" width="22" height="22" viewBox="0 0 24 24"><use href="#i_arc3"/></svg>
<svg class="a" style="left:27.0px;top:284.0px" width="22" height="22" viewBox="0 0 24 24"><use href="#i_pie"/></svg>
<svg class="a" style="left:2.0px;top:315.0px" width="22" height="22" viewBox="0 0 24 24"><use href="#i_move"/></svg>
<svg class="a" style="left:27.0px;top:315.0px" width="22" height="22" viewBox="0 0 24 24"><use href="#i_push"/></svg>
<svg class="a" style="left:2.0px;top:341.0px" width="22" height="22" viewBox="0 0 24 24"><use href="#i_rotate"/></svg>
<svg class="a" style="left:27.0px;top:341.0px" width="22" height="22" viewBox="0 0 24 24"><use href="#i_follow"/></svg>
<svg class="a" style="left:2.0px;top:367.0px" width="22" height="22" viewBox="0 0 24 24"><use href="#i_scale"/></svg>
<svg class="a" style="left:27.0px;top:367.0px" width="22" height="22" viewBox="0 0 24 24"><use href="#i_offset"/></svg>
<svg class="a" style="left:2.0px;top:397.0px" width="22" height="22" viewBox="0 0 24 24"><use href="#i_tape"/></svg>
<svg class="a" style="left:27.0px;top:397.0px" width="22" height="22" viewBox="0 0 24 24"><use href="#i_dim"/></svg>
<svg class="a" style="left:2.0px;top:423.0px" width="22" height="22" viewBox="0 0 24 24"><use href="#i_protractor"/></svg>
<svg class="a" style="left:27.0px;top:423.0px" width="22" height="22" viewBox="0 0 24 24"><use href="#i_text"/></svg>
<svg class="a" style="left:2.0px;top:449.0px" width="22" height="22" viewBox="0 0 24 24"><use href="#i_axes"/></svg>
<svg class="a" style="left:27.0px;top:449.0px" width="22" height="22" viewBox="0 0 24 24"><use href="#i_text3d"/></svg>
<svg class="a" style="left:2.0px;top:480.0px" width="22" height="22" viewBox="0 0 24 24"><use href="#i_orbit"/></svg>
<svg class="a" style="left:27.0px;top:480.0px" width="22" height="22" viewBox="0 0 24 24"><use href="#i_pan"/></svg>
<svg class="a" style="left:2.0px;top:506.0px" width="22" height="22" viewBox="0 0 24 24"><use href="#i_zoom"/></svg>
<svg class="a" style="left:27.0px;top:506.0px" width="22" height="22" viewBox="0 0 24 24"><use href="#i_zoomwin"/></svg>
<svg class="a" style="left:2.0px;top:532.0px" width="22" height="22" viewBox="0 0 24 24"><use href="#i_zoomext"/></svg>
<svg class="a" style="left:27.0px;top:532.0px" width="22" height="22" viewBox="0 0 24 24"><use href="#i_prev"/></svg>
<svg class="a" style="left:2.0px;top:562.0px" width="22" height="22" viewBox="0 0 24 24"><use href="#i_poscam"/></svg>
<svg class="a" style="left:27.0px;top:562.0px" width="22" height="22" viewBox="0 0 24 24"><use href="#i_look"/></svg>
<svg class="a" style="left:2.0px;top:588.0px" width="22" height="22" viewBox="0 0 24 24"><use href="#i_walk"/></svg>
<svg class="a" style="left:27.0px;top:588.0px" width="22" height="22" viewBox="0 0 24 24"><use href="#i_section"/></svg>
<svg class="a" style="left:2.0px;top:614.0px" width="22" height="22" viewBox="0 0 24 24"><use href="#i_wh3d"/></svg>
<svg class="a" style="left:27.0px;top:614.0px" width="22" height="22" viewBox="0 0 24 24"><use href="#i_whext"/></svg>
<svg class="a" style="left:2.0px;top:640.0px" width="22" height="22" viewBox="0 0 24 24"><use href="#i_layout"/></svg>
<svg class="a" style="left:27.0px;top:640.0px" width="22" height="22" viewBox="0 0 24 24"><use href="#i_extmgr"/></svg>
<div class="a" style="left:3px;top:176px;width:44px;height:2px;background:#a0a0a0;border-bottom:1px solid #fff"></div>
<div class="a" style="left:3px;top:311px;width:44px;height:2px;background:#a0a0a0;border-bottom:1px solid #fff"></div>
<div class="a" style="left:3px;top:394px;width:44px;height:2px;background:#a0a0a0;border-bottom:1px solid #fff"></div>
<div class="a" style="left:3px;top:475px;width:44px;height:2px;background:#a0a0a0;border-bottom:1px solid #fff"></div>
<div class="a" style="left:3px;top:558px;width:44px;height:2px;background:#a0a0a0;border-bottom:1px solid #fff"></div>
<div class="a" style="left:3px;top:665px;width:44px;height:2px;background:#a0a0a0;border-bottom:1px solid #fff"></div>
<div class="a" style="left:1712px;top:116px;width:208px;height:912px;background:#f0f0f0"></div>
<div class="a" style="left:1716px;top:116px;width:192px;height:12px;background:linear-gradient(180deg,#b4c4d8 0,#c6d4e4 35%,#d8e2ee 100%)"></div>
<div class="a" style="left:1718.78px;top:118.33px;font-size:8px;line-height:10.4px;color:#3c4c64;white-space:nowrap;transform-origin:0 0;transform:scaleX(1.062);">Default Tray</div>
<svg class="a" style="left:1895.0px;top:117.0px" width="10" height="10" viewBox="0 0 24 24"><use href="#i_pin"/></svg>
<svg class="a" style="left:1907.0px;top:117.0px" width="12" height="12" viewBox="0 0 24 24"><use href="#i_close"/></svg>
<div class="a" style="left:1909px;top:129px;width:11px;height:899px;background:#ececec;border-left:1px solid #e4e4e4"></div>
<svg class="a" style="left:1909.5px;top:132.5px" width="9" height="9" viewBox="0 0 24 24"><use href="#i_uparr"/></svg>
<div class="a" style="left:1910px;top:144px;width:9px;height:12px;background:linear-gradient(90deg,#f4f4f4,#cccccc);border:1px solid #c0c0c0"></div>
<div class="a" style="left:1716px;top:129px;width:192px;height:14px;background:linear-gradient(180deg,#fafafa 0,#ececec 40%,#d2d2d2 80%,#bcbcbc 100%);border-top:1px solid #d8d8d8"></div><svg class="a" style="left:1720px;top:132px" width="9" height="8"><path d="M0.5 0.5 H8 L4.25 7 Z" fill="#111"/></svg><div class="a" style="left:1732.25px;top:130.93px;font-size:8.8px;line-height:11.44px;color:#111;white-space:nowrap;transform-origin:0 0;transform:scaleX(1.022);">Entity Info</div><div class="a" style="left:1895px;top:131px;width:11px;height:10px;background:#fff;border:1px solid #666;border-radius:2px"></div><svg class="a" style="left:1897px;top:133px" width="7" height="6"><path d="M1 1 L6 5 M6 1 L1 5" stroke="#222" stroke-width="1.4"/></svg>
<div class="a" style="left:1722.34px;top:148.13px;font-size:9px;line-height:11.7px;font-weight:bold;color:#111;white-space:nowrap;transform-origin:0 0;transform:scaleX(0.983);">Group (1 in model)</div>
<div class="a" style="left:1719px;top:164px;width:188px;height:2px;background:#a8a8a8;border-bottom:1px solid #fff"></div>
<svg class="a" style="left:1725px;top:170px" width="34" height="37"><rect x="0.5" y="0.5" width="33" height="36" fill="#fff" stroke="#c4c4c4"/><path d="M2 3 L31 33 L2 33 Z" fill="#a2b0bc"/><path d="M1 34.5 H33" stroke="#d4d8de" stroke-width="2"/></svg>
<div class="a" style="left:1785.94px;top:171.73px;font-size:9px;line-height:11.7px;color:#111;white-space:nowrap;transform-origin:0 0;transform:scaleX(0.912);">Layer:</div>
<div class="a" style="left:1775.24px;top:187.43px;font-size:9px;line-height:11.7px;color:#111;white-space:nowrap;transform-origin:0 0;transform:scaleX(0.917);">Instance:</div>
<div class="a" style="left:1788.04px;top:205.33px;font-size:9px;line-height:11.7px;color:#111;white-space:nowrap;transform-origin:0 0;transform:scaleX(0.941);">Type:</div>
<div class="a" style="left:1778.64px;top:224.63px;font-size:9px;line-height:11.7px;color:#111;white-space:nowrap;transform-origin:0 0;transform:scaleX(0.898);">Toggles:</div>
<div class="a" style="left:1811px;top:170px;width:92px;height:16px;border:1px solid #6a6a6a;border-radius:2px;background:linear-gradient(180deg,#f4f4f4,#d4d4d4)"></div>
<div class="a" style="left:1813.04px;top:171.73px;font-size:9px;line-height:11.7px;color:#111;white-space:nowrap;transform-origin:0 0;transform:scaleX(0.858);">Mixed</div>
<svg class="a" style="left:1890.5px;top:173.5px" width="9" height="9" viewBox="0 0 24 24"><use href="#i_dnarr"/></svg>
<div class="a" style="left:1811px;top:187px;width:92px;height:15px;background:#fff"></div>
<div class="a" style="left:1811px;top:205px;width:92px;height:14px;border:1px solid #6a6a6a;border-radius:2px;background:linear-gradient(180deg,#f6f6f6,#dedede)"></div>
<div class="a" style="left:1813.64px;top:206.03px;font-size:9px;line-height:11.7px;color:#111;white-space:nowrap;transform-origin:0 0;transform:scaleX(0.951);">Type: &lt;undefined&gt;</div>
<div class="a" style="left:1888px;top:205px;width:15px;height:14px;border:1px solid #505050;background:#f0f0f0"></div>
<svg class="a" style="left:1891.0px;top:207.5px" width="9" height="9" viewBox="0 0 24 24"><use href="#i_dnarr"/></svg>
<div class="a" style="left:1810px;top:222px;width:16px;height:17px;background:#f6f6f6"></div>
<svg class="a" style="left:1812.0px;top:224.5px" width="12" height="12" viewBox="0 0 24 24"><use href="#i_eye"/></svg>
<div class="a" style="left:1828px;top:222px;width:16px;height:17px;background:#f6f6f6"></div>
<svg class="a" style="left:1830.0px;top:224.5px" width="12" height="12" viewBox="0 0 24 24"><use href="#i_lock"/></svg>
<div class="a" style="left:1846px;top:222px;width:16px;height:17px;background:#f6f6f6"></div>
<svg class="a" style="left:1848.0px;top:224.5px" width="12" height="12" viewBox="0 0 24 24"><use href="#i_shadow1"/></svg>
<div class="a" style="left:1864px;top:222px;width:16px;height:17px;background:#f6f6f6"></div>
<svg class="a" style="left:1866.0px;top:224.5px" width="12" height="12" viewBox="0 0 24 24"><use href="#i_shadow2"/></svg>
<div class="a" style="left:1716px;top:278px;width:192px;height:14px;background:linear-gradient(180deg,#fafafa 0,#ececec 40%,#d2d2d2 80%,#bcbcbc 100%);border-top:1px solid #d8d8d8"></div><svg class="a" style="left:1720px;top:281px" width="9" height="8"><path d="M0.5 0.5 H8 L4.25 7 Z" fill="#111"/></svg><div class="a" style="left:1732.25px;top:279.13px;font-size:8.8px;line-height:11.44px;color:#111;white-space:nowrap;transform-origin:0 0;transform:scaleX(0.983);">Materials</div><div class="a" style="left:1895px;top:280px;width:11px;height:10px;background:#fff;border:1px solid #666;border-radius:2px"></div><svg class="a" style="left:1897px;top:282px" width="7" height="6"><path d="M1 1 L6 5 M6 1 L1 5" stroke="#222" stroke-width="1.4"/></svg>
<svg class="a" style="left:1717px;top:293px" width="50" height="53"><rect x="0.5" y="0.5" width="49" height="52" fill="#fff" stroke="#c4c4c4"/><path d="M2 3 L47 49 L2 49 Z" fill="#a2b0bc"/><path d="M1 50.5 H49" stroke="#d4d8de" stroke-width="2"/></svg>
<div class="a" style="left:1769px;top:294px;width:118px;height:14px;background:#f2f2f2;border:1px solid #d0d0d0;"></div>
<div class="a" style="left:1773.05px;top:294.83px;font-size:8.8px;line-height:11.44px;color:#9a9a9a;white-space:nowrap;transform-origin:0 0;transform:scaleX(0.950);">Default</div>
<svg class="a" style="left:1892.5px;top:294.5px" width="11" height="11" viewBox="0 0 24 24"><use href="#i_bucket"/></svg>
<svg class="a" style="left:1889.5px;top:311.5px" width="13" height="13" viewBox="0 0 24 24"><use href="#i_cyl"/></svg>
<svg class="a" style="left:1890px;top:330px" width="16" height="16"><rect width="16" height="16" fill="#fff"/><path d="M0 0 L16 16 H0 Z" fill="#a2b0bc"/></svg>
<div class="a" style="left:1716px;top:348px;width:192px;height:2px;background:#b0b0b0;border-bottom:1px solid #fff"></div>
<div class="a" style="left:1749px;top:353px;width:28px;height:14px;background:linear-gradient(180deg,#f8f8f8,#e2e2e2);border:1px solid #a8a8a8;"></div>
<div class="a" style="left:1716px;top:351px;width:34px;height:16px;background:#f2f2f2;border:1px solid #a8a8a8;border-bottom:none;"></div>
<div class="a" style="left:1720.95px;top:354.13px;font-size:8.8px;line-height:11.44px;color:#111;white-space:nowrap;transform-origin:0 0;transform:scaleX(0.875);">Select</div>
<div class="a" style="left:1752.35px;top:355.53px;font-size:8.8px;line-height:11.44px;color:#111;white-space:nowrap;transform-origin:0 0;transform:scaleX(0.851);">Edit</div>
<svg class="a" style="left:1891.0px;top:351.0px" width="12" height="12" viewBox="0 0 24 24"><use href="#i_dropper"/></svg>
<div class="a" style="left:1716px;top:367px;width:192px;height:1px;background:#a0a0a0"></div>
<div class="a" style="left:1718px;top:369px;width:189px;height:22px;background:#ebebeb"></div>
<svg class="a" style="left:1722.5px;top:373.5px" width="11" height="11" viewBox="0 0 24 24"><use href="#i_larr"/></svg>
<svg class="a" style="left:1740.5px;top:373.5px" width="11" height="11" viewBox="0 0 24 24"><use href="#i_rarr"/></svg>
<svg class="a" style="left:1759.0px;top:373.0px" width="12" height="12" viewBox="0 0 24 24"><use href="#i_house"/></svg>
<div class="a" style="left:1775px;top:371px;width:113px;height:19px;background:#fff;border:1px solid #f4f4f4;"></div>
<div class="a" style="left:1778.15px;top:374.83px;font-size:8.8px;line-height:11.44px;color:#111;white-space:nowrap;transform-origin:0 0;transform:scaleX(0.892);">Bluestone</div>
<svg class="a" style="left:1879.0px;top:378.0px" width="8" height="8" viewBox="0 0 24 24"><use href="#i_dnarr"/></svg>
<svg class="a" style="left:1893.0px;top:373.0px" width="12" height="12" viewBox="0 0 24 24"><use href="#i_detail"/></svg>
<div class="a" style="left:1779px;top:387px;width:94px;height:2px;background:#707070"></div>
<div class="a" style="left:1715px;top:392px;width:193px;height:193px;background:#fff;border-top:1px solid #c8c8c8"></div>
<div class="a" style="left:1720px;top:393px;width:38px;height:38px;border:1px solid #c8c8c8;background:#fff"><div style="position:absolute;left:5px;top:1px;width:26px;height:34px;background:linear-gradient(160deg,#858585,#6e6e6e 50%,#7a7a7a)"></div></div>
<div class="a" style="left:1759px;top:393px;width:38px;height:38px;border:1px solid #c8c8c8;background:#fff"><div style="position:absolute;left:2px;top:1px;width:34px;height:34px;background:repeating-linear-gradient(90deg,#b4c0c0 0,#9aa6a8 2px,#c0caca 3px,#a4aeb0 5px)"></div></div>
<div class="a" style="left:1798px;top:393px;width:38px;height:38px;border:1px solid #c8c8c8;background:#fff"><div style="position:absolute;left:4px;top:1px;width:28px;height:34px;background:linear-gradient(170deg,#95897a,#7c7060 60%,#8a7e6c)"></div></div>
<div class="a" style="left:1837px;top:393px;width:38px;height:38px;border:1px solid #c8c8c8;background:#fff"><div style="position:absolute;left:11px;top:1px;width:14px;height:34px;background:linear-gradient(180deg,#a49a88,#8e8472)"></div></div>
<div class="a" style="left:1720px;top:432px;width:38px;height:38px;border:1px solid #c8c8c8;background:#fff"><div style="position:absolute;left:9px;top:1px;width:18px;height:34px;background:repeating-linear-gradient(90deg,#cdc19c 0,#bdb08a 3px,#d2c6a2 5px)"></div></div>
<div class="a" style="left:1716px;top:587px;width:192px;height:14px;background:linear-gradient(180deg,#fafafa 0,#ececec 40%,#d2d2d2 80%,#bcbcbc 100%);border-top:1px solid #d8d8d8"></div><svg class="a" style="left:1720px;top:590px" width="9" height="8"><path d="M0.5 0.5 H8 L4.25 7 Z" fill="#111"/></svg><div class="a" style="left:1732.25px;top:589.63px;font-size:8.8px;line-height:11.44px;color:#111;white-space:nowrap;transform-origin:0 0;transform:scaleX(1.028);">Components</div><div class="a" style="left:1895px;top:589px;width:11px;height:10px;background:#fff;border:1px solid #666;border-radius:2px"></div><svg class="a" style="left:1897px;top:591px" width="7" height="6"><path d="M1 1 L6 5 M6 1 L1 5" stroke="#222" stroke-width="1.4"/></svg>
<div class="a" style="left:1718px;top:604px;width:49px;height:52px;background:#f4f4f4;border:1px solid #c8c8c8;"></div>
<svg class="a" style="left:1725.0px;top:613.0px" width="34" height="34" viewBox="0 0 24 24"><use href="#i_component"/></svg>
<div class="a" style="left:1769px;top:604px;width:118px;height:15px;background:#f0f0f0;border:1px solid #d0d0d0;"></div>
<div class="a" style="left:1769px;top:620px;width:118px;height:36px;background:#f0f0f0;border:1px solid #d0d0d0;"></div>
<svg class="a" style="left:1892.5px;top:605.5px" width="11" height="11" viewBox="0 0 24 24"><use href="#i_bucket"/></svg>
<div class="a" style="left:1716px;top:659px;width:192px;height:2px;background:#b0b0b0;border-bottom:1px solid #fff"></div>
<div class="a" style="left:1749px;top:664px;width:30px;height:14px;background:linear-gradient(180deg,#f8f8f8,#e2e2e2);border:1px solid #a8a8a8;"></div>
<div class="a" style="left:1780px;top:664px;width:39px;height:14px;background:linear-gradient(180deg,#f8f8f8,#e2e2e2);border:1px solid #a8a8a8;"></div>
<div class="a" style="left:1716px;top:662px;width:34px;height:16px;background:#f2f2f2;border:1px solid #a8a8a8;border-bottom:none;"></div>
<div class="a" style="left:1720.65px;top:665.13px;font-size:8.8px;line-height:11.44px;color:#111;white-space:nowrap;transform-origin:0 0;transform:scaleX(0.900);">Select</div>
<div class="a" style="left:1752.05px;top:666.23px;font-size:8.8px;line-height:11.44px;color:#111;white-space:nowrap;transform-origin:0 0;transform:scaleX(0.897);">Edit</div>
<div class="a" style="left:1783.55px;top:666.23px;font-size:8.8px;line-height:11.44px;color:#111;white-space:nowrap;transform-origin:0 0;transform:scaleX(0.923);">Statistics</div>
<div class="a" style="left:1716px;top:678px;width:192px;height:1px;background:#a0a0a0"></div>
<div class="a" style="left:1718px;top:680px;width:189px;height:19px;background:#ebebeb"></div>
<svg class="a" style="left:1725.5px;top:683.5px" width="11" height="11" viewBox="0 0 24 24"><use href="#i_grid"/></svg>
<svg class="a" style="left:1747.0px;top:683.0px" width="12" height="12" viewBox="0 0 24 24"><use href="#i_house"/></svg>
<svg class="a" style="left:1762.5px;top:683.5px" width="9" height="9" viewBox="0 0 24 24"><use href="#i_dnarr"/></svg>
<div class="a" style="left:1775px;top:682px;width:104px;height:14px;background:#fff;border:1px solid #c8c8c8;"></div>
<div class="a" style="left:1776.15px;top:682.93px;font-size:8.8px;line-height:11.44px;color:#999;white-space:nowrap;transform-origin:0 0;transform:scaleX(0.934);">3D Warehouse</div>
<div class="a" style="left:1878px;top:682px;width:14px;height:14px;background:#fff;border:1px solid #c8c8c8;"></div>
<svg class="a" style="left:1880.5px;top:684.5px" width="9" height="9" viewBox="0 0 24 24"><use href="#i_search"/></svg>
<svg class="a" style="left:1894.5px;top:683.5px" width="11" height="11" viewBox="0 0 24 24"><use href="#i_detail"/></svg>
<div class="a" style="left:1716px;top:700px;width:192px;height:1px;background:#a0a0a0"></div>
<div class="a" style="left:1717px;top:701px;width:180px;height:79px;background:#fff"></div>
<div class="a" style="left:1897px;top:701px;width:10px;height:79px;background:#f4f4f4"></div>
<svg class="a" style="left:1898.0px;top:703.0px" width="8" height="8" viewBox="0 0 24 24"><use href="#i_uparr"/></svg>
<svg class="a" style="left:1898.0px;top:769.0px" width="8" height="8" viewBox="0 0 24 24"><use href="#i_dnarr"/></svg>
<div class="a" style="left:1897px;top:714px;width:10px;height:12px;background:linear-gradient(90deg,#f8f8f8,#d4d4d4);border:1px solid #c0c0c0"></div>
<div class="a" style="left:1721px;top:707px;width:48px;height:49px;background:#fff;border:1px solid #c8c8c8;"></div>
<svg class="a" style="left:1722px;top:708px" width="46" height="47"><path d="M2 26 Q10 20 18 24 L30 22 Q38 26 40 34 L36 38 Q24 40 14 34 Q6 32 2 28 Z" fill="#a05828"/><circle cx="26" cy="16" r="6" fill="#f0d8b0"/><path d="M20 20 Q26 30 34 26 L36 34 Q28 38 18 32 Z" fill="#4a8ad0"/><circle cx="33" cy="15" r="5" fill="#f4dca8"/><path d="M30 20 Q38 22 42 32 L34 34 Z" fill="#e88848"/><path d="M36 38 L42 42 L36 46 Z" fill="#2a9a2a"/></svg>
<div class="a" style="left:1771.95px;top:709.13px;font-size:8.8px;line-height:11.44px;font-weight:bold;color:#111;white-space:nowrap;transform-origin:0 0;transform:scaleX(1.004);">2D Girls Dog</div>
<div class="a" style="left:1771.95px;top:718.53px;font-size:8.8px;line-height:11.44px;color:#111;white-space:nowrap;transform-origin:0 0;transform:scaleX(0.924);">by SketchUp</div>
<div class="a" style="left:1771.95px;top:729.03px;font-size:8.8px;line-height:11.44px;color:#111;white-space:nowrap;transform-origin:0 0;transform:scaleX(0.931);">Use the Interact Tool to change</div>
<div class="a" style="left:1771.95px;top:738.43px;font-size:8.8px;line-height:11.44px;color:#111;white-space:nowrap;transform-origin:0 0;transform:scaleX(0.905);">the color of the girls' clothes and...</div>
<div class="a" style="left:1721px;top:763px;width:48px;height:17px;background:#fff;border:1px solid #c8c8c8;border-bottom:none"></div>
<svg class="a" style="left:1722px;top:764px" width="46" height="16"><path d="M2 12 L20 6 L40 8" stroke="#666" stroke-width="0.8" fill="none"/></svg>
<div class="a" style="left:1771.95px;top:764.63px;font-size:8.8px;line-height:11.44px;font-weight:bold;color:#111;white-space:nowrap;transform-origin:0 0;transform:scaleX(1.006);">3D Printer Build Volume</div>
<div class="a" style="left:1717px;top:780px;width:190px;height:16px;background:#f8f8f8;border-top:1px solid #d8d8d8"></div>
<svg class="a" style="left:1721.0px;top:783.0px" width="10" height="10" viewBox="0 0 24 24"><use href="#i_larr"/></svg>
<svg class="a" style="left:1895.0px;top:783.0px" width="10" height="10" viewBox="0 0 24 24"><use href="#i_rarr"/></svg>
<div class="a" style="left:1775.15px;top:781.43px;font-size:8.8px;line-height:11.44px;color:#666;white-space:nowrap;transform-origin:0 0;transform:scaleX(0.887);">Components Sampler</div>
<div class="a" style="left:1716px;top:800px;width:192px;height:14px;background:linear-gradient(180deg,#fafafa 0,#ececec 40%,#d2d2d2 80%,#bcbcbc 100%);border-top:1px solid #d8d8d8"></div><svg class="a" style="left:1720px;top:803px" width="9" height="8"><path d="M0.5 0.5 H8 L4.25 7 Z" fill="#111"/></svg><div class="a" style="left:1732.25px;top:801.93px;font-size:8.8px;line-height:11.44px;color:#111;white-space:nowrap;transform-origin:0 0;transform:scaleX(0.926);">Styles</div><div class="a" style="left:1895px;top:802px;width:11px;height:10px;background:#fff;border:1px solid #666;border-radius:2px"></div><svg class="a" style="left:1897px;top:804px" width="7" height="6"><path d="M1 1 L6 5 M6 1 L1 5" stroke="#222" stroke-width="1.4"/></svg>
<div class="a" style="left:1718px;top:815px;width:49px;height:53px;background:#fff;border:1px solid #c8c8c8;"></div>
<svg class="a" style="left:1719px;top:816px" width="47" height="51"><path d="M4 20 L18 10 L30 16 L30 44 L14 50 L4 44 Z" fill="#fff" stroke="#222" stroke-width="1"/><path d="M4 20 L18 10 L30 16 L16 24 Z" fill="#888" stroke="#222" stroke-width="0.8"/><rect x="22" y="24" width="20" height="22" rx="4" fill="#b4c8d8" stroke="#222" stroke-width="1.3"/><path d="M12 30 Q14 18 28 20 L30 16 L34 24 L26 26 L28 22 Q18 22 16 32 Z" fill="#666"/><path d="M38 34 Q34 46 22 42 L20 46 L16 38 L24 36 L22 40 Q32 42 34 34 Z" fill="#666"/><path d="M2 2 V44" stroke="#3030a0" stroke-width="0.7"/><path d="M2 44 L28 50" stroke="#a04040" stroke-width="0.7"/></svg>
<div class="a" style="left:1770px;top:815px;width:116px;height:15px;background:#fff;border:1px solid #e8e8e8;"></div>
<div class="a" style="left:1773.45px;top:817.43px;font-size:8.8px;line-height:11.44px;color:#111;white-space:nowrap;transform-origin:0 0;transform:scaleX(0.909);">Construction Documentation St</div>
<div class="a" style="left:1770px;top:831px;width:116px;height:37px;background:#fff;border:1px solid #e8e8e8;"></div>
<div class="a" style="left:1773.45px;top:832.93px;font-size:8.8px;line-height:11.44px;color:#111;white-space:nowrap;transform-origin:0 0;transform:scaleX(0.927);">Default face colors. Profile</div>
<div class="a" style="left:1773.45px;top:842.43px;font-size:8.8px;line-height:11.44px;color:#111;white-space:nowrap;transform-origin:0 0;transform:scaleX(0.912);">Edges. White background.</div>
<svg class="a" style="left:1892.5px;top:816.5px" width="11" height="11" viewBox="0 0 24 24"><use href="#i_stylesave"/></svg>
<svg class="a" style="left:1891.0px;top:835.0px" width="12" height="12" viewBox="0 0 24 24"><use href="#i_styleadd"/></svg>
<svg class="a" style="left:1892.5px;top:853.5px" width="11" height="11" viewBox="0 0 24 24"><use href="#i_refresh"/></svg>
<div class="a" style="left:1716px;top:871px;width:192px;height:2px;background:#b0b0b0;border-bottom:1px solid #fff"></div>
<div class="a" style="left:1749px;top:875px;width:30px;height:14px;background:linear-gradient(180deg,#f8f8f8,#e2e2e2);border:1px solid #a8a8a8;"></div>
<div class="a" style="left:1780px;top:875px;width:29px;height:14px;background:linear-gradient(180deg,#f8f8f8,#e2e2e2);border:1px solid #a8a8a8;"></div>
<div class="a" style="left:1716px;top:873px;width:34px;height:16px;background:#f2f2f2;border:1px solid #a8a8a8;border-bottom:none;"></div>
<div class="a" style="left:1721.05px;top:876.93px;font-size:8.8px;line-height:11.44px;color:#111;white-space:nowrap;transform-origin:0 0;transform:scaleX(0.879);">Select</div>
<div class="a" style="left:1752.05px;top:878.13px;font-size:8.8px;line-height:11.44px;color:#111;white-space:nowrap;transform-origin:0 0;transform:scaleX(0.864);">Edit</div>
<div class="a" style="left:1782.95px;top:878.13px;font-size:8.8px;line-height:11.44px;color:#111;white-space:nowrap;transform-origin:0 0;transform:scaleX(0.957);">Mix</div>
<div class="a" style="left:1716px;top:889px;width:192px;height:1px;background:#a0a0a0"></div>
<div class="a" style="left:1718px;top:891px;width:189px;height:22px;background:#ebebeb"></div>
<svg class="a" style="left:1722.5px;top:895.5px" width="11" height="11" viewBox="0 0 24 24"><use href="#i_larr"/></svg>
<svg class="a" style="left:1740.5px;top:895.5px" width="11" height="11" viewBox="0 0 24 24"><use href="#i_rarr"/></svg>
<svg class="a" style="left:1759.0px;top:895.0px" width="12" height="12" viewBox="0 0 24 24"><use href="#i_house"/></svg>
<div class="a" style="left:1775px;top:893px;width:113px;height:19px;background:#fff;border:1px solid #f4f4f4;"></div>
<div class="a" style="left:1778.15px;top:897.93px;font-size:8.8px;line-height:11.44px;color:#111;white-space:nowrap;transform-origin:0 0;transform:scaleX(0.923);">Default Styles</div>
<svg class="a" style="left:1879.0px;top:900.0px" width="8" height="8" viewBox="0 0 24 24"><use href="#i_dnarr"/></svg>
<svg class="a" style="left:1893.0px;top:895.0px" width="12" height="12" viewBox="0 0 24 24"><use href="#i_detail"/></svg>
<div class="a" style="left:1715px;top:913px;width:193px;height:115px;background:#fff"></div>
<svg class="a" style="left:1720px;top:915px" width="37" height="37"><rect x="0.5" y="0.5" width="36" height="36" fill="#fff" stroke="#c8c8c8"/><rect x="1" y="1" width="35" height="15" fill="#86bce6"/><rect x="1" y="16" width="35" height="20" fill="#c8c8c8"/><path d="M5 13 L13 6 L23 9 L23 31 L12 34 L5 30 Z" fill="#fff" stroke="#222" stroke-width="1"/><path d="M5 13 L13 6 L23 9 L15 15 Z" fill="#9a9a9a" stroke="#222" stroke-width="0.8"/><path d="M15 15 V34" stroke="#222" stroke-width="0.8"/><rect x="17" y="17" width="16" height="17" rx="3" fill="#a8c0d4" stroke="#222" stroke-width="1.3"/><path d="M3 2 V32" stroke="#3030a0" stroke-width="0.6"/><path d="M3 32 L30 36" stroke="#b04040" stroke-width="0.6"/></svg>
<svg class="a" style="left:1759px;top:915px" width="37" height="37"><rect x="0.5" y="0.5" width="36" height="36" fill="#fff" stroke="#c8c8c8"/><rect x="1" y="1" width="35" height="15" fill="#d4d4d4"/><rect x="1" y="16" width="35" height="20" fill="#c8c8c8"/><path d="M5 13 L13 6 L23 9 L23 31 L12 34 L5 30 Z" fill="#fff" stroke="#222" stroke-width="1"/><path d="M5 13 L13 6 L23 9 L15 15 Z" fill="#9a9a9a" stroke="#222" stroke-width="0.8"/><path d="M15 15 V34" stroke="#222" stroke-width="0.8"/><rect x="17" y="17" width="16" height="17" rx="3" fill="#a8c0d4" stroke="#222" stroke-width="1.3"/><path d="M3 2 V32" stroke="#3030a0" stroke-width="0.6"/><path d="M3 32 L30 36" stroke="#b04040" stroke-width="0.6"/></svg>
<svg class="a" style="left:1798px;top:915px" width="37" height="37"><rect x="0.5" y="0.5" width="36" height="36" fill="#fff" stroke="#c8c8c8"/><path d="M5 13 L13 6 L23 9 L23 31 L12 34 L5 30 Z" fill="#fff" stroke="#222" stroke-width="1"/><path d="M5 13 L13 6 L23 9 L15 15 Z" fill="#9a9a9a" stroke="#222" stroke-width="0.8"/><path d="M15 15 V34" stroke="#222" stroke-width="0.8"/><rect x="17" y="17" width="16" height="17" rx="3" fill="#a8c0d4" stroke="#222" stroke-width="1.3"/><path d="M3 2 V32" stroke="#3030a0" stroke-width="0.6"/><path d="M3 32 L30 36" stroke="#b04040" stroke-width="0.6"/></svg>
<svg class="a" style="left:1837px;top:915px" width="37" height="37"><rect x="0.5" y="0.5" width="36" height="36" fill="#fff" stroke="#c8c8c8"/><rect x="1" y="1" width="35" height="15" fill="#d4d4d4"/><rect x="1" y="16" width="35" height="20" fill="#d8d4bc"/><path d="M5 13 L13 6 L23 9 L23 31 L12 34 L5 30 Z" fill="#fff" stroke="#222" stroke-width="1"/><path d="M5 13 L13 6 L23 9 L15 15 Z" fill="#9a9a9a" stroke="#222" stroke-width="0.8"/><path d="M15 15 V34" stroke="#222" stroke-width="0.8"/><rect x="17" y="17" width="16" height="17" rx="3" fill="#a8c0d4" stroke="#222" stroke-width="1.3"/><path d="M3 2 V32" stroke="#3030a0" stroke-width="0.6"/><path d="M3 32 L30 36" stroke="#b04040" stroke-width="0.6"/></svg>
<svg class="a" style="left:1720px;top:954px" width="37" height="37"><rect x="0.5" y="0.5" width="36" height="36" fill="#fff" stroke="#c8c8c8"/><path d="M5 13 L13 6 L23 9 L23 31 L12 34 L5 30 Z M15 15 V34" fill="none" stroke="#666" stroke-width="0.8"/><path d="M17 17 H32 M17 33 H32" fill="none" stroke="#666" stroke-width="0.8"/><path d="M3 2 V32" stroke="#3030a0" stroke-width="0.6"/><path d="M3 32 L30 36" stroke="#b04040" stroke-width="0.6"/><circle cx="29" cy="30" r="4" fill="#fff" stroke="#3a9a3a" stroke-width="1"/><path d="M29 27.5 V30.5" stroke="#3a9a3a" stroke-width="1"/></svg>
<svg class="a" style="left:1759px;top:954px" width="37" height="37"><rect x="0.5" y="0.5" width="36" height="36" fill="#fff" stroke="#c8c8c8"/><rect x="1" y="1" width="35" height="15" fill="#9fb2cc"/><rect x="1" y="16" width="35" height="20" fill="#a8b090"/><path d="M5 13 L13 6 L23 9 L23 31 L12 34 L5 30 Z" fill="#fff" stroke="#222" stroke-width="1"/><path d="M5 13 L13 6 L23 9 L15 15 Z" fill="#9a9a9a" stroke="#222" stroke-width="0.8"/><path d="M15 15 V34" stroke="#222" stroke-width="0.8"/><rect x="17" y="17" width="16" height="17" rx="3" fill="#a8c0d4" stroke="#222" stroke-width="1.3"/><path d="M3 2 V32" stroke="#3030a0" stroke-width="0.6"/><path d="M3 32 L30 36" stroke="#b04040" stroke-width="0.6"/></svg>
<svg class="a" style="left:1798px;top:954px" width="37" height="37"><rect x="0.5" y="0.5" width="36" height="36" fill="#fff" stroke="#c8c8c8"/><path d="M5 13 L13 6 L23 9 L23 31 L12 34 L5 30 Z" fill="#fff" stroke="#222" stroke-width="1"/><path d="M5 13 L13 6 L23 9 L15 15 Z" fill="#9a9a9a" stroke="#222" stroke-width="0.8"/><path d="M15 15 V34" stroke="#222" stroke-width="0.8"/><rect x="17" y="17" width="16" height="17" rx="3" fill="#a8c0d4" stroke="#222" stroke-width="1.3"/><path d="M3 2 V32" stroke="#3030a0" stroke-width="0.6"/><path d="M3 32 L30 36" stroke="#b04040" stroke-width="0.6"/><circle cx="29" cy="30" r="4" fill="#fff" stroke="#3a9a3a" stroke-width="1"/><path d="M29 27.5 V30.5" stroke="#3a9a3a" stroke-width="1"/></svg>
<svg class="a" style="left:1837px;top:954px" width="37" height="37"><rect x="0.5" y="0.5" width="36" height="36" fill="#fff" stroke="#c8c8c8"/><path d="M5 13 L13 6 L23 9 L23 31 L12 34 L5 30 Z" fill="#fff" stroke="#222" stroke-width="1"/><path d="M5 13 L13 6 L23 9 L15 15 Z" fill="#9a9a9a" stroke="#222" stroke-width="0.8"/><path d="M15 15 V34" stroke="#222" stroke-width="0.8"/><rect x="17" y="17" width="16" height="17" rx="3" fill="#a8c0d4" stroke="#222" stroke-width="1.3"/><path d="M3 2 V32" stroke="#3030a0" stroke-width="0.6"/><path d="M3 32 L30 36" stroke="#b04040" stroke-width="0.6"/><circle cx="29" cy="30" r="4" fill="#fff" stroke="#3a9a3a" stroke-width="1"/><path d="M29 27.5 V30.5" stroke="#3a9a3a" stroke-width="1"/></svg>
<svg class="a" style="left:1720px;top:993px" width="37" height="37"><rect x="0.5" y="0.5" width="36" height="36" fill="#fff" stroke="#c8c8c8"/><rect x="1" y="1" width="35" height="15" fill="#86bce6"/><rect x="1" y="16" width="35" height="20" fill="#88b070"/><path d="M5 13 L13 6 L23 9 L23 31 L12 34 L5 30 Z" fill="#fff" stroke="#222" stroke-width="1"/><path d="M5 13 L13 6 L23 9 L15 15 Z" fill="#9a9a9a" stroke="#222" stroke-width="0.8"/><path d="M15 15 V34" stroke="#222" stroke-width="0.8"/><rect x="17" y="17" width="16" height="17" rx="3" fill="#a8c0d4" stroke="#222" stroke-width="1.3"/><path d="M3 2 V32" stroke="#3030a0" stroke-width="0.6"/><path d="M3 32 L30 36" stroke="#b04040" stroke-width="0.6"/></svg>
<svg class="a" style="left:1759px;top:993px" width="37" height="37"><rect x="0.5" y="0.5" width="36" height="36" fill="#fff" stroke="#c8c8c8"/><rect x="1" y="1" width="35" height="15" fill="#86bce6"/><rect x="1" y="16" width="35" height="20" fill="#c8c8c8"/><path d="M5 13 L13 6 L23 9 L23 31 L12 34 L5 30 Z" fill="#fff" stroke="#222" stroke-width="1"/><path d="M5 13 L13 6 L23 9 L15 15 Z" fill="#9a9a9a" stroke="#222" stroke-width="0.8"/><path d="M15 15 V34" stroke="#222" stroke-width="0.8"/><rect x="17" y="17" width="16" height="17" rx="3" fill="#a8c0d4" stroke="#222" stroke-width="1.3"/><path d="M3 2 V32" stroke="#3030a0" stroke-width="0.6"/><path d="M3 32 L30 36" stroke="#b04040" stroke-width="0.6"/></svg>
<svg class="a" style="left:1798px;top:993px" width="37" height="37"><rect x="0.5" y="0.5" width="36" height="36" fill="#fff" stroke="#c8c8c8"/><path d="M5 13 L13 6 L23 9 L23 31 L12 34 L5 30 Z M15 15 V34" fill="none" stroke="#666" stroke-width="0.8"/><path d="M17 17 H32 M17 33 H32" fill="none" stroke="#666" stroke-width="0.8"/><path d="M3 2 V32" stroke="#3030a0" stroke-width="0.6"/><path d="M3 32 L30 36" stroke="#b04040" stroke-width="0.6"/><circle cx="29" cy="30" r="4" fill="#fff" stroke="#3a9a3a" stroke-width="1"/><path d="M29 27.5 V30.5" stroke="#3a9a3a" stroke-width="1"/></svg>
<svg class="a" style="left:1837px;top:993px" width="37" height="37"><rect x="0.5" y="0.5" width="36" height="36" fill="#fff" stroke="#c8c8c8"/><rect x="1" y="1" width="35" height="15" fill="#d4d4d4"/><rect x="1" y="16" width="35" height="20" fill="#c0c0c0"/><path d="M5 13 L13 6 L23 9 L23 31 L12 34 L5 30 Z" fill="#fff" stroke="#222" stroke-width="1"/><path d="M5 13 L13 6 L23 9 L15 15 Z" fill="#9a9a9a" stroke="#222" stroke-width="0.8"/><path d="M15 15 V34" stroke="#222" stroke-width="0.8"/><rect x="17" y="17" width="16" height="17" rx="3" fill="#a8c0d4" stroke="#222" stroke-width="1.3"/><path d="M3 2 V32" stroke="#3030a0" stroke-width="0.6"/><path d="M3 32 L30 36" stroke="#b04040" stroke-width="0.6"/></svg>
<svg class="a" style="left:1910.0px;top:1019.0px" width="8" height="8" viewBox="0 0 24 24"><use href="#i_dnarr"/></svg>
<div class="a" id="status"></div>
<div class="a" style="left:52.94px;top:1034.53px;font-size:9px;line-height:11.7px;color:#111;white-space:nowrap;transform-origin:0 0;transform:scaleX(1.092);">Select objects. Shift to extend select. Drag mouse to select multiple.</div>
<div class="a" style="left:1695.04px;top:1034.78px;font-size:9px;line-height:11.7px;color:#111;white-space:nowrap;transform-origin:0 0;transform:scaleX(1.079);">Measurements</div>
<div class="a" style="left:1680px;top:1032px;width:1px;height:14px;background:#b0b0b0"></div>
<div class="a" style="left:1767px;top:1031px;width:150px;height:18px;background:#f2f4f6;border:1px solid #c8ccd4"></div>
<svg class="a" style="left:2px;top:1034px" width="40" height="13"><circle cx="6.5" cy="6.5" r="5" fill="#f4f4f4" stroke="#c0c0c0" stroke-width="1.2"/><circle cx="6.5" cy="5" r="1.6" fill="#aaa"/><path d="M6.5 6 V9" stroke="#aaa" stroke-width="1.4"/><circle cx="28.5" cy="6.5" r="5.2" fill="#fff" stroke="#111" stroke-width="1.3"/><path d="M28.5 3 V10" stroke="#111" stroke-width="1.8"/><circle cx="28.5" cy="4.5" r="1.2" fill="#111"/></svg>
<div class="a" style="left:45px;top:1035px;width:1px;height:9px;background:#999"></div>
</body></html>
